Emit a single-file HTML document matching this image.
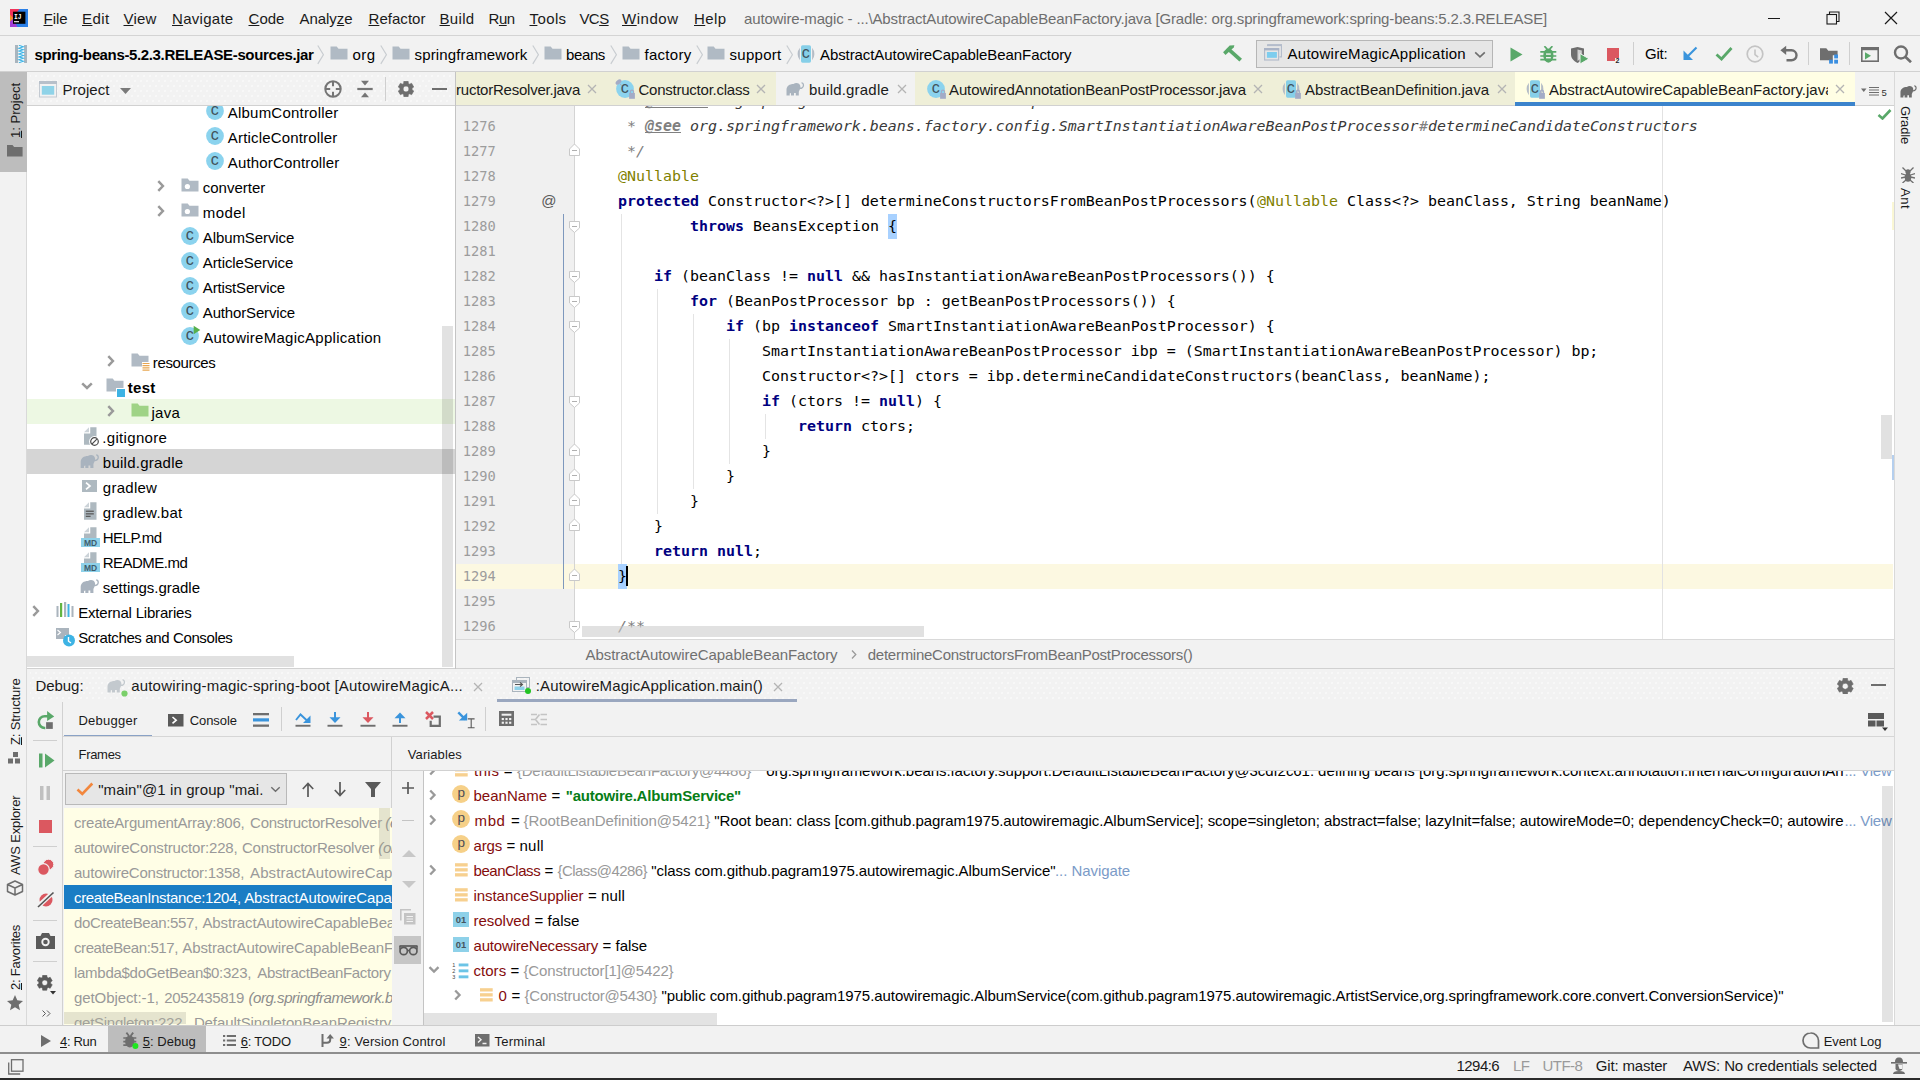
<!DOCTYPE html><html><head><meta charset="utf-8"><title>autowire-magic</title><style>
html,body{margin:0;padding:0}
body{width:1920px;height:1080px;overflow:hidden;position:relative;background:#f2f2f2;font-family:'Liberation Sans',sans-serif;font-size:15px;color:#000}
.a{position:absolute;display:block}
.t{position:absolute;white-space:pre;display:block}

.dots{background-image:radial-gradient(circle,#f9f9f9 0.6px,rgba(249,249,249,0) 1px),radial-gradient(circle,#f9f9f9 0.6px,rgba(249,249,249,0) 1px);background-size:6px 10px,6px 10px;background-position:0 1px,3px 6px}
u{text-decoration-skip-ink:none;text-underline-offset:1px}
</style></head><body><div class="a" style="left:0px;top:0px;width:1920px;height:35px;background:#f2f2f2;"></div><div class="a" style="left:0px;top:35px;width:1920px;height:1px;background:#d4d4d4;"></div><svg class="a" style="left:10px;top:9px;" width="18" height="18" viewBox="0 0 18 18"><rect width="18" height="18" fill="#2b7fe6"/><path d="M0 0h9.500L0 12z" fill="#f0325a"/><path d="M0 5.500L3.500 9.500 0 14z" fill="#f78c28"/><path d="M0 12.500l3 -2.500 4.500 8H0z" fill="#a13fd6"/><rect x="3" y="2.700" width="12.400" height="12.100" fill="#000"/><text x="4" y="9.600" font-size="7.400" font-weight="700" font-family="Liberation Mono,monospace" fill="#fff" textLength="7.500" lengthAdjust="spacingAndGlyphs">IJ</text><rect x="4" y="12" width="5" height="1.300" fill="#d8d8d8"/></svg><span class="t" id="t0" style="font-size:15px;line-height:20px;color:#1a1a1a;letter-spacing:-0.047px;left:43.5px;top:8.8px;"><u>F</u>ile</span><span class="t" id="t1" style="font-size:15px;line-height:20px;color:#1a1a1a;letter-spacing:0.410px;left:82.0px;top:8.8px;"><u>E</u>dit</span><span class="t" id="t2" style="font-size:15px;line-height:20px;color:#1a1a1a;letter-spacing:0.188px;left:123.5px;top:8.8px;"><u>V</u>iew</span><span class="t" id="t3" style="font-size:15px;line-height:20px;color:#1a1a1a;letter-spacing:0.285px;left:172.0px;top:8.8px;"><u>N</u>avigate</span><span class="t" id="t4" style="font-size:15px;line-height:20px;color:#1a1a1a;letter-spacing:0.031px;left:248.5px;top:8.8px;"><u>C</u>ode</span><span class="t" id="t5" style="font-size:15px;line-height:20px;color:#1a1a1a;letter-spacing:-0.054px;left:299.5px;top:8.8px;">Analy<u>z</u>e</span><span class="t" id="t6" style="font-size:15px;line-height:20px;color:#1a1a1a;letter-spacing:0.037px;left:368.5px;top:8.8px;"><u>R</u>efactor</span><span class="t" id="t7" style="font-size:15px;line-height:20px;color:#1a1a1a;letter-spacing:0.325px;left:439.5px;top:8.8px;"><u>B</u>uild</span><span class="t" id="t8" style="font-size:15px;line-height:20px;color:#1a1a1a;letter-spacing:-0.550px;left:488.6px;top:8.8px;">R<u>u</u>n</span><span class="t" id="t9" style="font-size:15px;line-height:20px;color:#1a1a1a;letter-spacing:0.394px;left:529.5px;top:8.8px;"><u>T</u>ools</span><span class="t" id="t10" style="font-size:15px;line-height:20px;color:#1a1a1a;letter-spacing:-0.550px;left:579.4px;top:8.8px;">VC<u>S</u></span><span class="t" id="t11" style="font-size:15px;line-height:20px;color:#1a1a1a;letter-spacing:0.521px;left:622.0px;top:8.8px;"><u>W</u>indow</span><span class="t" id="t12" style="font-size:15px;line-height:20px;color:#1a1a1a;letter-spacing:0.406px;left:694.0px;top:8.8px;"><u>H</u>elp</span><span class="t" id="t13" style="font-size:15px;line-height:20px;color:#6e6e6e;letter-spacing:-0.153px;left:744.0px;top:8.8px;">autowire-magic - ...\AbstractAutowireCapableBeanFactory.java [Gradle: org.springframework:spring-beans:5.2.3.RELEASE]</span><div class="a" style="left:1768px;top:18px;width:12px;height:1px;background:#1a1a1a;"></div><svg class="a" style="left:1826px;top:11px;" width="14" height="14" viewBox="0 0 14 14"><path d="M3.500 3.500v-2.500h9.500v9.500h-2.500" fill="none" stroke="#1a1a1a" stroke-width="1.100"/><rect x="1" y="3.500" width="9.500" height="9.500" fill="none" stroke="#1a1a1a" stroke-width="1.100"/></svg><svg class="a" style="left:1884px;top:11px;" width="14" height="14" viewBox="0 0 14 14"><path d="M1 1l12 12M13 1l-12 12" stroke="#1a1a1a" stroke-width="1.200" fill="none"/></svg><div class="a" style="left:0px;top:36px;width:1920px;height:35px;background:#f2f2f2;"></div><div class="a" style="left:0px;top:71px;width:1920px;height:1px;background:#d1d1d1;"></div><svg class="a" style="left:14.9px;top:44.8px;" width="12.2" height="18.2" viewBox="0 0 12.2 18.2"><rect x="0" y="0" width="3.100" height="18.200" fill="#a9b5be"/><rect x="9.100" y="0" width="3.100" height="18.200" fill="#a9b5be"/><rect x="3.700" y="0" width="4.800" height="18.200" fill="#f4fbfe"/><polyline points="3.9 0.30 8.3 1.75 3.9 3.20 8.3 4.65 3.9 6.10 8.3 7.55 3.9 9.00 8.3 10.45 3.9 11.90 8.3 13.35 3.9 14.80 8.3 16.25 3.9 17.70" fill="none" stroke="#3fb4e6" stroke-width="1.100"/></svg><span class="t" id="t14" style="font-size:15px;line-height:20px;color:#000;font-weight:700;letter-spacing:-0.358px;left:34.5px;top:44.7px;">spring-beans-5.2.3.RELEASE-sources.jar</span><svg class="a" style="left:317px;top:44.5px;" width="8" height="20" viewBox="0 0 8 20"><path d="M0.800 0.500l5.600 9.200-5.600 9.200" fill="none" stroke="#c9cdd1" stroke-width="1.200"/></svg><svg class="a" style="left:380px;top:44.5px;" width="8" height="20" viewBox="0 0 8 20"><path d="M0.800 0.500l5.600 9.200-5.600 9.200" fill="none" stroke="#c9cdd1" stroke-width="1.200"/></svg><svg class="a" style="left:532px;top:44.5px;" width="8" height="20" viewBox="0 0 8 20"><path d="M0.800 0.500l5.600 9.200-5.600 9.200" fill="none" stroke="#c9cdd1" stroke-width="1.200"/></svg><svg class="a" style="left:610px;top:44.5px;" width="8" height="20" viewBox="0 0 8 20"><path d="M0.800 0.500l5.600 9.200-5.600 9.200" fill="none" stroke="#c9cdd1" stroke-width="1.200"/></svg><svg class="a" style="left:695.5px;top:44.5px;" width="8" height="20" viewBox="0 0 8 20"><path d="M0.800 0.500l5.600 9.200-5.600 9.200" fill="none" stroke="#c9cdd1" stroke-width="1.200"/></svg><svg class="a" style="left:785.5px;top:44.5px;" width="8" height="20" viewBox="0 0 8 20"><path d="M0.800 0.500l5.600 9.200-5.600 9.200" fill="none" stroke="#c9cdd1" stroke-width="1.200"/></svg><svg class="a" style="left:330px;top:46.3px;" width="18" height="14" viewBox="0 0 18 14"><path d="M0.5 0.5h6.2l1.8 2.2h9v10.8h-17z" fill="#b0bac4"/></svg><span class="t" id="t15" style="font-size:15px;line-height:20px;color:#000;letter-spacing:0.438px;left:352.5px;top:44.7px;">org</span><svg class="a" style="left:392px;top:46.3px;" width="18" height="14" viewBox="0 0 18 14"><path d="M0.5 0.5h6.2l1.8 2.2h9v10.8h-17z" fill="#b0bac4"/></svg><span class="t" id="t16" style="font-size:15px;line-height:20px;color:#000;letter-spacing:0.142px;left:414.5px;top:44.7px;">springframework</span><svg class="a" style="left:544px;top:46.3px;" width="18" height="14" viewBox="0 0 18 14"><path d="M0.5 0.5h6.2l1.8 2.2h9v10.8h-17z" fill="#b0bac4"/></svg><span class="t" id="t17" style="font-size:15px;line-height:20px;color:#000;letter-spacing:-0.375px;left:566.0px;top:44.7px;">beans</span><svg class="a" style="left:622px;top:46.3px;" width="18" height="14" viewBox="0 0 18 14"><path d="M0.5 0.5h6.2l1.8 2.2h9v10.8h-17z" fill="#b0bac4"/></svg><span class="t" id="t18" style="font-size:15px;line-height:20px;color:#000;letter-spacing:0.283px;left:644.5px;top:44.7px;">factory</span><svg class="a" style="left:707px;top:46.3px;" width="18" height="14" viewBox="0 0 18 14"><path d="M0.5 0.5h6.2l1.8 2.2h9v10.8h-17z" fill="#b0bac4"/></svg><span class="t" id="t19" style="font-size:15px;line-height:20px;color:#000;letter-spacing:0.279px;left:729.5px;top:44.7px;">support</span><svg class="a" style="left:797px;top:45.3px;overflow:visible;" width="20" height="19" viewBox="0 0 20 19"><rect x="4" y="0.300" width="10" height="17.400" rx="1.600" fill="#86cfe8"/><path d="M2.900 2.800a9.500 9.500 0 0 0 0 12.400z" fill="#b4bcc6"/><path d="M15.100 2.800a9.500 9.500 0 0 1 0 12.400z" fill="#b4bcc6"/><text x="8.8" y="13.300" font-size="16" font-family="Liberation Sans,sans-serif" text-anchor="middle" fill="#42525b">c</text></svg><span class="t" id="t20" style="font-size:15px;line-height:20px;color:#000;letter-spacing:-0.082px;left:820.0px;top:44.7px;">AbstractAutowireCapableBeanFactory</span><svg class="a" style="left:1222px;top:44px;" width="21" height="18" viewBox="0 0 21 18"><path d="M1.100 8.200l6.600-6.700 4.700-.300-.700 2.300-8.200 7.400z" fill="#59a869"/><path d="M6.300 7.400l2.700-2.500 11 9.800-2.600 2.700z" fill="#59a869"/></svg><div class="a" style="left:1256px;top:40px;width:237px;height:27.5px;background:#e6e6e6;border:1.500px solid #b6b6b6;box-sizing:border-box;"></div><svg class="a" style="left:1264px;top:44px;" width="18" height="17" viewBox="0 0 18 17"><path d="M3.500 0.800h14v12h-2" fill="none" stroke="#b4bccb" stroke-width="1.200"/><rect x="3" y="0.300" width="15" height="1.800" fill="#b4bccb"/><rect x="0.600" y="4.600" width="14" height="11.400" fill="#e6e6e6" stroke="#b4bccb" stroke-width="1.200"/><rect x="0" y="4" width="15.200" height="2.400" fill="#a9b3c6"/><rect x="2.900" y="8" width="10" height="5.800" fill="#7dcdee"/></svg><span class="t" id="t21" style="font-size:15px;line-height:20px;color:#000;letter-spacing:0.281px;left:1287.5px;top:44.3px;">AutowireMagicApplication</span><svg class="a" style="left:1474px;top:50.5px;" width="12" height="8" viewBox="0 0 12 8"><path d="M1.200 1.300l4.800 4.600 4.800-4.600" fill="none" stroke="#6e6e6e" stroke-width="1.6"/></svg><svg class="a" style="left:1510px;top:47px;" width="13" height="15" viewBox="0 0 13 15"><path d="M0.500 0.500v14l12-7z" fill="#59a869"/></svg><svg class="a" style="left:1540px;top:46px;" width="17" height="17" viewBox="0 0 17 17"><ellipse cx="8.400" cy="9.600" rx="5.100" ry="7.100" fill="#59a869"/><path d="M0.300 5.900h16M0.300 10h16M0.300 13.700h16" stroke="#59a869" stroke-width="1.700"/><path d="M4.400 0.200l2.800 3M12.400 0.200l-2.800 3" stroke="#59a869" stroke-width="1.700" fill="none"/><rect x="6" y="7.400" width="4.800" height="1.400" fill="#f2f2f2"/><rect x="6" y="11" width="4.800" height="1.400" fill="#f2f2f2"/></svg><svg class="a" style="left:1570px;top:46.5px;" width="21" height="17" viewBox="0 0 21 17"><path d="M1 1.500l6.500-1.500 6.500 1.500v6c0 4-3 6.800-6.500 8.500-3.500-1.700-6.500-4.500-6.500-8.500z" fill="#6e6e6e"/><path d="M7.500 2.500v11.500c2.500-1.500 4.300-3.500 4.300-6.500v-4z" fill="#f2f2f2" opacity=".75"/><path d="M10 6.500v10.500l9-5.200z" fill="#59a869" stroke="#f2f2f2" stroke-width="1"/></svg><div class="a" style="left:1606.5px;top:48px;width:12.5px;height:12.5px;background:#db5860;"></div><div class="a" style="left:1615px;top:58px;width:6px;height:6px;background:#f2f2f2;"></div><span class="t" id="t22" style="font-size:7px;line-height:10px;color:#222;font-weight:700;left:1615.5px;top:55.6px;">2</span><div class="a" style="left:1633px;top:42px;width:1px;height:23px;background:#cfcfcf;"></div><span class="t" id="t23" style="font-size:15px;line-height:20px;color:#000;letter-spacing:-0.211px;left:1645.0px;top:44.3px;">Git:</span><svg class="a" style="left:1682px;top:46px;" width="16" height="15" viewBox="0 0 16 15"><path d="M14.500 1.500l-11 11" stroke="#3a94dc" stroke-width="2.200" fill="none"/><path d="M1.500 4.500v9.500h9.500z" fill="#3a94dc"/></svg><svg class="a" style="left:1715px;top:46px;" width="18" height="15" viewBox="0 0 18 15"><path d="M1.500 8.500l5 4.500 10-11" stroke="#59a869" stroke-width="2.800" fill="none"/></svg><svg class="a" style="left:1746px;top:45px;" width="18" height="18" viewBox="0 0 18 18"><circle cx="9" cy="9" r="7.800" fill="none" stroke="#c4c4c4" stroke-width="1.700"/><path d="M9 4.500v5l3.200 2.600" fill="none" stroke="#c4c4c4" stroke-width="1.600"/></svg><svg class="a" style="left:1780px;top:45px;" width="18" height="17" viewBox="0 0 18 17"><path d="M5.500 5.300h6a5 5 0 0 1 0 10h-5" fill="none" stroke="#6e6e6e" stroke-width="2.400"/><path d="M6.200 0.700v9.200l-5.800-4.600z" fill="#6e6e6e"/></svg><div class="a" style="left:1808px;top:42px;width:1px;height:23px;background:#cfcfcf;"></div><svg class="a" style="left:1820px;top:47.5px;" width="19" height="16" viewBox="0 0 19 16"><path d="M0 0.300h6.300l2 2.500h9.300v4.500h-4.800v5h-12.800z" fill="#6e6e6e"/><rect x="14.200" y="6.500" width="3.800" height="3.900" fill="#3a8ee0"/><rect x="9.100" y="11.700" width="3.800" height="3.900" fill="#3a8ee0"/><rect x="14.200" y="11.700" width="3.800" height="3.900" fill="#3a8ee0"/></svg><div class="a" style="left:1849px;top:42px;width:1px;height:23px;background:#cfcfcf;"></div><svg class="a" style="left:1861px;top:46.5px;" width="18" height="15" viewBox="0 0 18 15"><rect x="0.800" y="0.800" width="16.400" height="13.400" fill="none" stroke="#6e6e6e" stroke-width="1.600"/><rect x="0" y="0" width="18" height="3.200" fill="#6e6e6e"/><path d="M4 5.200v7.200l6-3.600z" fill="#59a869"/></svg><svg class="a" style="left:1892.2px;top:45px;" width="20" height="18" viewBox="0 0 20 18"><circle cx="9" cy="7.500" r="6" fill="none" stroke="#6e6e6e" stroke-width="2.400"/><path d="M13.300 11.800l5.700 5.400" stroke="#6e6e6e" stroke-width="2.700"/></svg><div class="a" style="left:0px;top:72px;width:27px;height:953px;background:#f2f2f2;"></div><div class="a" style="left:26px;top:72px;width:1px;height:953px;background:#d9d9d9;"></div><div class="a" style="left:0px;top:72px;width:27px;height:100px;background:#bdbdbd;"></div><span class="t" id="t24" style="font-size:13px;line-height:18px;color:#1a1a1a;letter-spacing:0.008px;left:6.7px;top:138.0px;transform-origin:0 0;transform:rotate(-90deg);"><u>1</u>: Project</span><svg class="a" style="left:7px;top:145px;" width="16" height="12" viewBox="0 0 16 12"><path d="M0 0h5.500l1.600 2h8.500v9.500h-15.600z" fill="#6e6e6e"/></svg><span class="t" id="t25" style="font-size:13px;line-height:18px;color:#1a1a1a;letter-spacing:-0.118px;left:6.7px;top:745.0px;transform-origin:0 0;transform:rotate(-90deg);"><u>Z</u>: Structure</span><svg class="a" style="left:8px;top:752px;" width="13" height="12" viewBox="0 0 13 12"><rect x="5" y="0" width="5" height="5" fill="#6e6e6e"/><rect x="0" y="6.500" width="5" height="5" fill="#6e6e6e"/><rect x="7" y="6.500" width="5" height="5" fill="#6e6e6e"/></svg><span class="t" id="t26" style="font-size:13px;line-height:18px;color:#1a1a1a;letter-spacing:-0.138px;left:6.7px;top:874.5px;transform-origin:0 0;transform:rotate(-90deg);">AWS Explorer</span><svg class="a" style="left:6px;top:880px;" width="18" height="16" viewBox="0 0 18 16"><path d="M9 1l7.500 3.500v7l-7.500 3.500-7.500-3.500v-7z M1.500 4.500l7.500 3.500 7.500-3.500 M9 8v7" fill="none" stroke="#6e6e6e" stroke-width="1.500" stroke-linejoin="round"/></svg><span class="t" id="t27" style="font-size:13px;line-height:18px;color:#1a1a1a;letter-spacing:-0.243px;left:6.7px;top:990.0px;transform-origin:0 0;transform:rotate(-90deg);"><u>2</u>: Favorites</span><svg class="a" style="left:6.5px;top:995px;" width="16" height="15.5" viewBox="0 0 16 15.5"><path d="M8 0l2.300 5.300 5.700.600-4.300 3.800 1.300 5.600-5-3-5 3 1.300-5.600-4.300-3.800 5.700-.600z" fill="#6e6e6e"/></svg><div class="a" style="left:1894px;top:72px;width:26px;height:953px;background:#f2f2f2;"></div><div class="a" style="left:1894px;top:72px;width:1px;height:953px;background:#d9d9d9;"></div><svg class="a" style="left:1899.5px;top:84.8px;" width="17.5" height="13" viewBox="0 0 19 14"><path d="M0.500 13.500V8C0.500 4 3.500 2 7.500 2C9 0.700 11.500 0.500 13 1.800C14.300 2.900 14.600 4.500 14.300 5.600C15.800 5.600 16.800 4.600 16.800 3.200C16.800 2.200 16.200 1.600 15.500 1.600L15.500 0.300C17 0.300 18.100 1.500 18.100 3.200C18.100 5.600 16.300 7.100 14 7.100C13.500 8.500 12.800 9.500 12.800 10V13.500H9.800V11H8V13.500H5V11C4.500 11 4 11.200 3.700 11.500V13.500Z" fill="#6e6e6e"/></svg><span class="t" id="t28" style="font-size:13px;line-height:18px;color:#1a1a1a;letter-spacing:-0.172px;left:1914.0px;top:105.5px;transform-origin:0 0;transform:rotate(90deg);">Gradle</span><svg class="a" style="left:1901px;top:166.5px;" width="14" height="16" viewBox="0 0 14 16"><ellipse cx="7" cy="10.500" rx="3.300" ry="4.200" fill="#6e6e6e"/><circle cx="7" cy="4.800" r="2.600" fill="#6e6e6e"/><path d="M5 4l-3.500-3.500M9 4l3.500-3.500M4.500 8l-4.500-1.500M9.500 8l4.500-1.500M4.500 10l-4.500 1M9.500 10l4.500 1M5 13l-3.500 3M9 13l3.500 3" stroke="#6e6e6e" stroke-width="1.300" fill="none"/></svg><span class="t" id="t29" style="font-size:13px;line-height:18px;color:#1a1a1a;letter-spacing:0.550px;left:1914.0px;top:188.4px;transform-origin:0 0;transform:rotate(90deg);">Ant</span><div class="a" style="left:27px;top:72px;width:428px;height:34px;background:#f2f2f2;"></div><div class="a dots" style="left:30px;top:75px;width:422px;height:28px"></div><div class="a" style="left:27px;top:105px;width:428px;height:1px;background:#d1d1d1;"></div><div class="a" style="left:455px;top:72px;width:1px;height:597px;background:#c4c4c4;"></div><svg class="a" style="left:39px;top:81.3px;" width="18" height="17" viewBox="0 0 18 17"><rect x="0.500" y="0.500" width="17" height="15.500" fill="#f2f2f2" stroke="#c3cad2" stroke-width="1"/><rect x="0" y="0" width="18" height="3" fill="#b7c0ca"/><rect x="2.800" y="5" width="12.400" height="8.700" fill="#8fd3e8"/></svg><span class="t" id="t30" style="font-size:15px;line-height:20px;color:#1a1a1a;letter-spacing:0.045px;left:62.5px;top:79.8px;">Project</span><svg class="a" style="left:119.5px;top:87.5px;" width="11" height="6" viewBox="0 0 11 6"><path d="M0 0h11l-5.500 6z" fill="#7a7a7a"/></svg><svg class="a" style="left:324px;top:80px;" width="18" height="18" viewBox="0 0 18 18"><circle cx="9" cy="9" r="7.700" fill="none" stroke="#757575" stroke-width="2"/><path d="M9 1v5.200M9 11.800v5.200M1 9h5.200M11.800 9h5.200" stroke="#757575" stroke-width="2"/></svg><svg class="a" style="left:357px;top:80px;" width="16" height="18" viewBox="0 0 16 18"><rect x="0.300" y="7.900" width="15.400" height="2.200" fill="#757575"/><path d="M4 0.800h8l-4 4.600z M4 17.200h8l-4-4.600z" fill="#757575"/></svg><div class="a" style="left:385px;top:77px;width:1px;height:24px;background:#cfcfcf;"></div><svg class="a" style="left:398px;top:81px;" width="16" height="16" viewBox="0 0 16 16"><path fill-rule="evenodd" d="M5.87,0.29 L10.13,0.29 L10.38,2.38 L11.68,3.13 L13.61,2.30 L15.74,5.99 L14.05,7.25 L14.05,8.75 L15.74,10.01 L13.61,13.70 L11.68,12.87 L10.38,13.62 L10.13,15.71 L5.87,15.71 L5.62,13.62 L4.32,12.87 L2.39,13.70 L0.26,10.01 L1.95,8.75 L1.95,7.25 L0.26,5.99 L2.39,2.30 L4.32,3.13 L5.62,2.38z M8 5.100a2.900 2.900 0 1 0 0.001 0z" fill="#6e6e6e" stroke="#6e6e6e" stroke-width="0.600" stroke-linejoin="round"/></svg><div class="a" style="left:431.5px;top:88px;width:15px;height:2px;background:#6e6e6e;"></div><div class="a" style="left:27px;top:106px;width:428px;height:562px;overflow:hidden;background:#fff;"><div class="a" style="left:0px;top:293px;width:428px;height:25px;background:#edf8e3;"></div><div class="a" style="left:0px;top:343px;width:428px;height:25px;background:#d5d5d5;"></div><svg class="a" style="left:179px;top:-3.9000000000000057px;overflow:visible;" width="20" height="19" viewBox="0 0 20 19"><circle cx="9" cy="9" r="8.900" fill="#8bd3ee"/><text x="8.7" y="13.300" font-size="16" font-family="Liberation Sans,sans-serif" text-anchor="middle" fill="#42525b">c</text></svg><span class="t" id="t31" style="font-size:15px;line-height:20px;color:#000;letter-spacing:0.210px;left:200.8px;top:-2.9px;">AlbumController</span><svg class="a" style="left:179px;top:21.099999999999994px;overflow:visible;" width="20" height="19" viewBox="0 0 20 19"><circle cx="9" cy="9" r="8.900" fill="#8bd3ee"/><text x="8.7" y="13.300" font-size="16" font-family="Liberation Sans,sans-serif" text-anchor="middle" fill="#42525b">c</text></svg><span class="t" id="t32" style="font-size:15px;line-height:20px;color:#000;letter-spacing:0.176px;left:200.8px;top:22.1px;">ArticleController</span><svg class="a" style="left:179px;top:46.099999999999994px;overflow:visible;" width="20" height="19" viewBox="0 0 20 19"><circle cx="9" cy="9" r="8.900" fill="#8bd3ee"/><text x="8.7" y="13.300" font-size="16" font-family="Liberation Sans,sans-serif" text-anchor="middle" fill="#42525b">c</text></svg><span class="t" id="t33" style="font-size:15px;line-height:20px;color:#000;letter-spacing:0.155px;left:200.8px;top:47.1px;">AuthorController</span><svg class="a" style="left:129.7px;top:73.69999999999999px;" width="8" height="12" viewBox="0 0 8 12"><path d="M1.300 1.200l4.600 4.800-4.600 4.800" fill="none" stroke="#9a9a9a" stroke-width="2.500"/></svg><svg class="a" style="left:154px;top:72.19999999999999px;" width="18" height="14" viewBox="0 0 18 14"><path d="M0.5 0.5h6.2l1.8 2.2h9v10.8h-17z" fill="#b0bac4"/><circle cx="6.400" cy="8.500" r="2.600" fill="#fff"/></svg><span class="t" id="t34" style="font-size:15px;line-height:20px;color:#000;letter-spacing:-0.015px;left:175.8px;top:72.1px;">converter</span><svg class="a" style="left:129.7px;top:98.69999999999999px;" width="8" height="12" viewBox="0 0 8 12"><path d="M1.300 1.200l4.600 4.800-4.600 4.800" fill="none" stroke="#9a9a9a" stroke-width="2.500"/></svg><svg class="a" style="left:154px;top:97.19999999999999px;" width="18" height="14" viewBox="0 0 18 14"><path d="M0.5 0.5h6.2l1.8 2.2h9v10.8h-17z" fill="#b0bac4"/><circle cx="6.400" cy="8.500" r="2.600" fill="#fff"/></svg><span class="t" id="t35" style="font-size:15px;line-height:20px;color:#000;letter-spacing:0.428px;left:175.8px;top:97.1px;">model</span><svg class="a" style="left:154px;top:121.1px;overflow:visible;" width="20" height="19" viewBox="0 0 20 19"><circle cx="9" cy="9" r="8.900" fill="#8bd3ee"/><text x="8.7" y="13.300" font-size="16" font-family="Liberation Sans,sans-serif" text-anchor="middle" fill="#42525b">c</text></svg><span class="t" id="t36" style="font-size:15px;line-height:20px;color:#000;letter-spacing:-0.096px;left:175.8px;top:122.1px;">AlbumService</span><svg class="a" style="left:154px;top:146.1px;overflow:visible;" width="20" height="19" viewBox="0 0 20 19"><circle cx="9" cy="9" r="8.900" fill="#8bd3ee"/><text x="8.7" y="13.300" font-size="16" font-family="Liberation Sans,sans-serif" text-anchor="middle" fill="#42525b">c</text></svg><span class="t" id="t37" style="font-size:15px;line-height:20px;color:#000;letter-spacing:-0.093px;left:175.8px;top:147.1px;">ArticleService</span><svg class="a" style="left:154px;top:171.10000000000002px;overflow:visible;" width="20" height="19" viewBox="0 0 20 19"><circle cx="9" cy="9" r="8.900" fill="#8bd3ee"/><text x="8.7" y="13.300" font-size="16" font-family="Liberation Sans,sans-serif" text-anchor="middle" fill="#42525b">c</text></svg><span class="t" id="t38" style="font-size:15px;line-height:20px;color:#000;letter-spacing:-0.153px;left:175.8px;top:172.1px;">ArtistService</span><svg class="a" style="left:154px;top:196.10000000000002px;overflow:visible;" width="20" height="19" viewBox="0 0 20 19"><circle cx="9" cy="9" r="8.900" fill="#8bd3ee"/><text x="8.7" y="13.300" font-size="16" font-family="Liberation Sans,sans-serif" text-anchor="middle" fill="#42525b">c</text></svg><span class="t" id="t39" style="font-size:15px;line-height:20px;color:#000;letter-spacing:-0.155px;left:175.8px;top:197.1px;">AuthorService</span><svg class="a" style="left:154px;top:221.10000000000002px;overflow:visible;" width="20" height="19" viewBox="0 0 20 19"><circle cx="9" cy="9" r="8.900" fill="#8bd3ee"/><text x="8.7" y="13.300" font-size="16" font-family="Liberation Sans,sans-serif" text-anchor="middle" fill="#42525b">c</text><path d="M12.700 -1.200v8.500l6.600-4.250z" fill="#57b04c"/></svg><span class="t" id="t40" style="font-size:15px;line-height:20px;color:#000;letter-spacing:0.272px;left:176.2px;top:222.1px;">AutowireMagicApplication</span><svg class="a" style="left:79.7px;top:248.7px;" width="8" height="12" viewBox="0 0 8 12"><path d="M1.300 1.200l4.600 4.800-4.600 4.800" fill="none" stroke="#9a9a9a" stroke-width="2.500"/></svg><svg class="a" style="left:104px;top:247.0px;" width="18" height="14" viewBox="0 0 18 14"><path d="M0.5 0.5h6.2l1.8 2.2h9v10.8h-17z" fill="#b0bac4"/></svg><svg class="a" style="left:115px;top:255.5px;" width="8" height="9" viewBox="0 0 8 9"><rect width="8" height="9" fill="#fff"/><path d="M0.500 1.500h7M0.500 3.700h7M0.500 5.900h7M0.500 8.100h7" stroke="#e8a650" stroke-width="1.200"/></svg><span class="t" id="t41" style="font-size:15px;line-height:20px;color:#000;letter-spacing:-0.351px;left:125.8px;top:247.1px;">resources</span><svg class="a" style="left:54px;top:276.3px;" width="12" height="8" viewBox="0 0 12 8"><path d="M1.200 1.300l4.800 4.600 4.800-4.600" fill="none" stroke="#9a9a9a" stroke-width="2.5"/></svg><svg class="a" style="left:79px;top:272.0px;" width="18" height="14" viewBox="0 0 18 14"><path d="M0.5 0.5h6.2l1.8 2.2h9v10.8h-17z" fill="#b0bac4"/></svg><svg class="a" style="left:89px;top:281.5px;" width="9" height="9" viewBox="0 0 9 9"><rect width="9" height="9" fill="#fff"/><rect x="1" y="1" width="8" height="8" fill="#3db3e4"/></svg><span class="t" id="t42" style="font-size:15px;line-height:20px;color:#000;font-weight:700;letter-spacing:0.253px;left:100.8px;top:272.1px;">test</span><svg class="a" style="left:79.7px;top:298.7px;" width="8" height="12" viewBox="0 0 8 12"><path d="M1.300 1.200l4.600 4.800-4.600 4.800" fill="none" stroke="#9a9a9a" stroke-width="2.500"/></svg><svg class="a" style="left:104px;top:297.2px;" width="18" height="14" viewBox="0 0 18 14"><path d="M0.5 0.5h6.2l1.8 2.2h9v10.8h-17z" fill="#9fd386"/></svg><span class="t" id="t43" style="font-size:15px;line-height:20px;color:#000;letter-spacing:0.242px;left:124.5px;top:297.1px;">java</span><svg class="a" style="left:56.900000000000006px;top:321px;" width="13" height="18" viewBox="0 0 13 18"><path d="M6.250 0.200V6.450H0V17.700H12.500V0.200Z" fill="#aeb9c0"/><path d="M5 0.200L0 5.200H5Z" fill="#ccd3d8"/></svg><svg class="a" style="left:62px;top:329.8px;" width="11" height="11" viewBox="0 0 11 11"><circle cx="5.500" cy="5.500" r="5.400" fill="#fff"/><circle cx="5.500" cy="5.500" r="3.800" fill="none" stroke="#4a4a4a" stroke-width="1.200"/><path d="M2.900 8.100l5.200-5.200" stroke="#4a4a4a" stroke-width="1.200"/></svg><span class="t" id="t44" style="font-size:15px;line-height:20px;color:#000;letter-spacing:0.318px;left:75.3px;top:322.1px;">.gitignore</span><svg class="a" style="left:53.3px;top:348px;" width="20" height="14.5" viewBox="0 0 19 14"><path d="M0.500 13.500V8C0.500 4 3.500 2 7.500 2C9 0.700 11.500 0.500 13 1.800C14.300 2.900 14.600 4.500 14.300 5.600C15.800 5.600 16.800 4.600 16.800 3.200C16.800 2.200 16.200 1.600 15.500 1.600L15.500 0.300C17 0.300 18.100 1.500 18.100 3.200C18.100 5.600 16.300 7.100 14 7.100C13.500 8.500 12.800 9.500 12.800 10V13.500H9.800V11H8V13.500H5V11C4.500 11 4 11.200 3.700 11.500V13.500Z" fill="#a9b3be"/></svg><span class="t" id="t45" style="font-size:15px;line-height:20px;color:#000;letter-spacing:0.245px;left:75.8px;top:347.1px;">build.gradle</span><svg class="a" style="left:55.3px;top:374px;" width="15" height="12" viewBox="0 0 15 12"><rect width="15" height="12" fill="#aeb9c0"/><path d="M4 2.600l4 3.400-4 3.400" stroke="#fff" stroke-width="1.700" fill="none"/></svg><span class="t" id="t46" style="font-size:15px;line-height:20px;color:#000;letter-spacing:0.267px;left:75.8px;top:372.1px;">gradlew</span><svg class="a" style="left:56.900000000000006px;top:396px;" width="13" height="18" viewBox="0 0 13 18"><path d="M6.250 0.200V6.450H0V17.700H12.500V0.200Z" fill="#aeb9c0"/><path d="M5 0.200L0 5.200H5Z" fill="#ccd3d8"/><rect x="1.800" y="8.600" width="8" height="1.300" fill="#5a5a5a"/><rect x="1.800" y="11.200" width="8" height="1.300" fill="#5a5a5a"/><rect x="1.800" y="13.700" width="4.800" height="1.300" fill="#5a5a5a"/></svg><span class="t" id="t47" style="font-size:15px;line-height:20px;color:#000;letter-spacing:0.270px;left:75.8px;top:397.1px;">gradlew.bat</span><svg class="a" style="left:56.900000000000006px;top:421px;" width="13" height="11" viewBox="0 0 13 11"><path d="M6.250 0.200V6.450H0V11H12.500V0.200Z" fill="#aeb9c0"/><path d="M5 0.200L0 5.200H5Z" fill="#ccd3d8"/></svg><svg class="a" style="left:54px;top:431.5px;" width="19" height="9" viewBox="0 0 19 9"><rect width="19" height="9" fill="#8ed1e9"/><text x="9.500" y="7.800" font-size="8.500" font-weight="700" font-family="Liberation Sans,sans-serif" text-anchor="middle" fill="#3f5d6e">MD</text></svg><span class="t" id="t48" style="font-size:15px;line-height:20px;color:#000;letter-spacing:-0.509px;left:75.8px;top:422.1px;">HELP.md</span><svg class="a" style="left:56.900000000000006px;top:446px;" width="13" height="11" viewBox="0 0 13 11"><path d="M6.250 0.200V6.450H0V11H12.500V0.200Z" fill="#aeb9c0"/><path d="M5 0.200L0 5.200H5Z" fill="#ccd3d8"/></svg><svg class="a" style="left:54px;top:456.5px;" width="19" height="9" viewBox="0 0 19 9"><rect width="19" height="9" fill="#8ed1e9"/><text x="9.500" y="7.800" font-size="8.500" font-weight="700" font-family="Liberation Sans,sans-serif" text-anchor="middle" fill="#3f5d6e">MD</text></svg><span class="t" id="t49" style="font-size:15px;line-height:20px;color:#000;letter-spacing:-0.532px;left:75.8px;top:447.1px;">README.md</span><svg class="a" style="left:53.3px;top:473px;" width="20" height="14.5" viewBox="0 0 19 14"><path d="M0.500 13.500V8C0.500 4 3.500 2 7.500 2C9 0.700 11.500 0.500 13 1.800C14.300 2.900 14.600 4.500 14.300 5.600C15.800 5.600 16.800 4.600 16.800 3.200C16.800 2.200 16.200 1.600 15.500 1.600L15.500 0.300C17 0.300 18.100 1.500 18.100 3.200C18.100 5.600 16.300 7.100 14 7.100C13.500 8.500 12.800 9.500 12.800 10V13.500H9.800V11H8V13.500H5V11C4.500 11 4 11.200 3.700 11.500V13.500Z" fill="#a9b3be"/></svg><span class="t" id="t50" style="font-size:15px;line-height:20px;color:#000;letter-spacing:-0.024px;left:75.8px;top:472.1px;">settings.gradle</span><svg class="a" style="left:4.699999999999999px;top:498.70000000000005px;" width="8" height="12" viewBox="0 0 8 12"><path d="M1.300 1.200l4.600 4.800-4.600 4.800" fill="none" stroke="#9a9a9a" stroke-width="2.500"/></svg><svg class="a" style="left:29px;top:496.0px;" width="18" height="15" viewBox="0 0 18 15"><rect x="0.500" y="4" width="2" height="11" fill="#aab4bd"/><rect x="4" y="1" width="2.200" height="14" fill="#62b543"/><rect x="8" y="0" width="2.200" height="15" fill="#aab4bd"/><rect x="11.500" y="2" width="2" height="13" fill="#3db3e4"/><rect x="15.500" y="4" width="2" height="11" fill="#aab4bd"/></svg><span class="t" id="t51" style="font-size:15px;line-height:20px;color:#000;letter-spacing:-0.190px;left:51.2px;top:497.1px;">External Libraries</span><svg class="a" style="left:29px;top:521.5px;" width="19" height="19" viewBox="0 0 19 19"><path d="M0 0h13v7h-4v4h-9z" fill="#aab4bd"/><path d="M1.500 2l3 2.500-3 2.500" stroke="#fff" stroke-width="1.100" fill="none"/><circle cx="13" cy="12.500" r="6" fill="#3db3e4"/><path d="M12.500 9v4.200l2.500 1.800" stroke="#fff" stroke-width="1.400" fill="none"/></svg><span class="t" id="t52" style="font-size:15px;line-height:20px;color:#000;letter-spacing:-0.377px;left:51.2px;top:522.1px;">Scratches and Consoles</span><div class="a" style="left:415px;top:220px;width:11px;height:341px;background:rgba(0,0,0,0.115);"></div><div class="a" style="left:0px;top:549.5px;width:267px;height:11px;background:#e1e1e1;"></div></div><div class="a" style="left:27px;top:668px;width:428px;height:1px;background:#d1d1d1;"></div><div class="a" style="left:456px;top:72px;width:1438px;height:33px;background:#f2f2f2;"></div><div class="a" style="left:456px;top:72px;width:320px;height:33px;background:#efefd8;"></div><div class="a" style="left:915px;top:72px;width:600px;height:33px;background:#efefd8;"></div><div class="a" style="left:1515px;top:72px;width:340px;height:33px;background:#fffee4;"></div><div class="a" style="left:456px;top:105px;width:1438px;height:1px;background:#d1d1d1;"></div><div class="a" style="left:1515px;top:102px;width:340px;height:4px;background:#3c84cc;"></div><span class="t" id="t53" style="font-size:15px;line-height:20px;color:#1a1a1a;letter-spacing:-0.231px;left:456.0px;top:79.8px;">ructorResolver.java</span><svg class="a" style="left:586.5px;top:84px;" width="10" height="10" viewBox="0 0 10 10"><path d="M1 1l8 8M9 1l-8 8" stroke="#b4b4b4" stroke-width="1.3" fill="none"/></svg><svg class="a" style="left:616px;top:80px;overflow:visible;" width="20" height="19" viewBox="0 0 20 19"><circle cx="9" cy="9" r="8.900" fill="#8bd3ee"/><ellipse cx="2.500" cy="2" rx="3.400" ry="2" transform="rotate(-42 2.500 2)" fill="#a3abc6"/><path d="M4 4l2 1.800" stroke="#a3abc6" stroke-width="1"/><text x="8.7" y="13.300" font-size="16" font-family="Liberation Sans,sans-serif" text-anchor="middle" fill="#42525b">c</text><rect x="13.100" y="13" width="5.800" height="5.800" fill="#a3abc6"/><path d="M14.400 13v-1.300a1.600 1.600 0 0 1 3.200 0v1.300" fill="none" stroke="#a3abc6" stroke-width="1.100"/></svg><span class="t" id="t54" style="font-size:15px;line-height:20px;color:#1a1a1a;letter-spacing:-0.238px;left:638.5px;top:79.8px;">Constructor.class</span><svg class="a" style="left:756px;top:84px;" width="10" height="10" viewBox="0 0 10 10"><path d="M1 1l8 8M9 1l-8 8" stroke="#b4b4b4" stroke-width="1.3" fill="none"/></svg><svg class="a" style="left:786px;top:82px;" width="19" height="14" viewBox="0 0 19 14"><path d="M0.500 13.500V8C0.500 4 3.500 2 7.500 2C9 0.700 11.500 0.500 13 1.800C14.300 2.900 14.600 4.500 14.300 5.600C15.800 5.600 16.800 4.600 16.800 3.200C16.800 2.200 16.200 1.600 15.500 1.600L15.500 0.300C17 0.300 18.100 1.500 18.100 3.200C18.100 5.600 16.300 7.100 14 7.100C13.500 8.500 12.800 9.500 12.800 10V13.500H9.800V11H8V13.500H5V11C4.500 11 4 11.200 3.700 11.500V13.500Z" fill="#a9b3be"/></svg><span class="t" id="t55" style="font-size:15px;line-height:20px;color:#1a1a1a;letter-spacing:0.203px;left:809.0px;top:79.8px;">build.gradle</span><svg class="a" style="left:896.5px;top:84px;" width="10" height="10" viewBox="0 0 10 10"><path d="M1 1l8 8M9 1l-8 8" stroke="#b4b4b4" stroke-width="1.3" fill="none"/></svg><svg class="a" style="left:926.5px;top:80px;overflow:visible;" width="20" height="19" viewBox="0 0 20 19"><circle cx="9" cy="9" r="8.900" fill="#8bd3ee"/><text x="8.7" y="13.300" font-size="16" font-family="Liberation Sans,sans-serif" text-anchor="middle" fill="#42525b">c</text><rect x="13.100" y="13" width="5.800" height="5.800" fill="#a3abc6"/><path d="M14.400 13v-1.300a1.600 1.600 0 0 1 3.200 0v1.300" fill="none" stroke="#a3abc6" stroke-width="1.100"/></svg><span class="t" id="t56" style="font-size:15px;line-height:20px;color:#1a1a1a;letter-spacing:-0.119px;left:949.0px;top:79.8px;">AutowiredAnnotationBeanPostProcessor.java</span><svg class="a" style="left:1253px;top:84px;" width="10" height="10" viewBox="0 0 10 10"><path d="M1 1l8 8M9 1l-8 8" stroke="#b4b4b4" stroke-width="1.3" fill="none"/></svg><svg class="a" style="left:1282px;top:80.2px;overflow:visible;" width="20" height="19" viewBox="0 0 20 19"><rect x="4" y="0.300" width="10" height="17.400" rx="1.600" fill="#86cfe8"/><path d="M2.900 2.800a9.500 9.500 0 0 0 0 12.400z" fill="#b4bcc6"/><path d="M15.100 2.800a9.500 9.500 0 0 1 0 12.400z" fill="#b4bcc6"/><text x="8.8" y="13.300" font-size="16" font-family="Liberation Sans,sans-serif" text-anchor="middle" fill="#42525b">c</text><rect x="13.100" y="13" width="5.800" height="5.800" fill="#a3abc6"/><path d="M14.400 13v-1.300a1.600 1.600 0 0 1 3.200 0v1.300" fill="none" stroke="#a3abc6" stroke-width="1.100"/></svg><span class="t" id="t57" style="font-size:15px;line-height:20px;color:#1a1a1a;letter-spacing:-0.010px;left:1305.0px;top:79.8px;">AbstractBeanDefinition.java</span><svg class="a" style="left:1496.5px;top:84px;" width="10" height="10" viewBox="0 0 10 10"><path d="M1 1l8 8M9 1l-8 8" stroke="#b4b4b4" stroke-width="1.3" fill="none"/></svg><svg class="a" style="left:1526px;top:80.2px;overflow:visible;" width="20" height="19" viewBox="0 0 20 19"><rect x="4" y="0.300" width="10" height="17.400" rx="1.600" fill="#86cfe8"/><path d="M2.900 2.800a9.500 9.500 0 0 0 0 12.400z" fill="#b4bcc6"/><path d="M15.100 2.800a9.500 9.500 0 0 1 0 12.400z" fill="#b4bcc6"/><text x="8.8" y="13.300" font-size="16" font-family="Liberation Sans,sans-serif" text-anchor="middle" fill="#42525b">c</text><rect x="13.100" y="13" width="5.800" height="5.800" fill="#a3abc6"/><path d="M14.400 13v-1.300a1.600 1.600 0 0 1 3.200 0v1.300" fill="none" stroke="#a3abc6" stroke-width="1.100"/></svg><div class="a" style="left:1549px;top:72px;width:278.5px;height:30px;overflow:hidden;"><span class="t" id="t58" style="font-size:15px;line-height:20px;color:#1a1a1a;letter-spacing:-0.010px;left:0.0px;top:7.8px;">AbstractAutowireCapableBeanFactory.java</span></div><svg class="a" style="left:1835px;top:84px;" width="10" height="10" viewBox="0 0 10 10"><path d="M1 1l8 8M9 1l-8 8" stroke="#b4b4b4" stroke-width="1.3" fill="none"/></svg><svg class="a" style="left:1861px;top:86px;" width="28" height="10" viewBox="0 0 28 10"><path d="M0 2.500h5.500l-2.750 3.500z" fill="#6e6e6e"/><path d="M8 1.500h10M8 4h10M8 6.500h10M8 9h10" stroke="#6e6e6e" stroke-width="1.100"/><text x="20.500" y="9.500" font-size="9.500" font-family="Liberation Sans,sans-serif" fill="#333">5</text></svg><div class="a" style="left:456px;top:106px;width:1438px;height:534px;overflow:hidden;background:#fff;"><div class="a" style="left:0px;top:0px;width:118.5px;height:534px;background:#f0f0f0;"></div><div class="a" style="left:0px;top:458px;width:1437px;height:25px;background:#fcf8e1;"></div><div class="a" style="left:1206px;top:0px;width:1px;height:534px;background:#e2e2e2;"></div><div class="a" style="left:118px;top:0px;width:1px;height:534px;background:#d4d4d4;"></div><div class="a" style="left:106.5px;top:108px;width:1.5px;height:375px;background:#7e98bd;"></div><div class="a" style="left:164.5px;top:108px;width:1px;height:350px;background:#e4e4e4;"></div><div class="a" style="left:200.5px;top:183px;width:1px;height:225px;background:#e4e4e4;"></div><div class="a" style="left:236.5px;top:208px;width:1px;height:175px;background:#e4e4e4;"></div><div class="a" style="left:272.5px;top:233px;width:1px;height:125px;background:#e4e4e4;"></div><div class="a" style="left:308.5px;top:308px;width:1px;height:25px;background:#e4e4e4;"></div><div class="a" style="left:432px;top:108.30000000000001px;width:9px;height:24.4px;background:#a8d1ff;"></div><div class="a" style="left:162px;top:458.29999999999995px;width:9px;height:24.4px;background:#a8d1ff;"></div><span class="t" id="t59" style="font-size:13.7px;line-height:18px;color:#9c9c9c;font-family:'DejaVu Sans Mono','Liberation Mono',monospace;left:6.8px;top:-14.3px;">1275</span><span class="t" id="t60" style="font-size:13.7px;line-height:18px;color:#9c9c9c;font-family:'DejaVu Sans Mono','Liberation Mono',monospace;left:6.8px;top:10.7px;">1276</span><span class="t" id="t61" style="font-size:13.7px;line-height:18px;color:#9c9c9c;font-family:'DejaVu Sans Mono','Liberation Mono',monospace;left:6.8px;top:35.7px;">1277</span><span class="t" id="t62" style="font-size:13.7px;line-height:18px;color:#9c9c9c;font-family:'DejaVu Sans Mono','Liberation Mono',monospace;left:6.8px;top:60.7px;">1278</span><span class="t" id="t63" style="font-size:13.7px;line-height:18px;color:#9c9c9c;font-family:'DejaVu Sans Mono','Liberation Mono',monospace;left:6.8px;top:85.7px;">1279</span><span class="t" id="t64" style="font-size:13.7px;line-height:18px;color:#9c9c9c;font-family:'DejaVu Sans Mono','Liberation Mono',monospace;left:6.8px;top:110.7px;">1280</span><span class="t" id="t65" style="font-size:13.7px;line-height:18px;color:#9c9c9c;font-family:'DejaVu Sans Mono','Liberation Mono',monospace;left:6.8px;top:135.7px;">1281</span><span class="t" id="t66" style="font-size:13.7px;line-height:18px;color:#9c9c9c;font-family:'DejaVu Sans Mono','Liberation Mono',monospace;left:6.8px;top:160.7px;">1282</span><span class="t" id="t67" style="font-size:13.7px;line-height:18px;color:#9c9c9c;font-family:'DejaVu Sans Mono','Liberation Mono',monospace;left:6.8px;top:185.7px;">1283</span><span class="t" id="t68" style="font-size:13.7px;line-height:18px;color:#9c9c9c;font-family:'DejaVu Sans Mono','Liberation Mono',monospace;left:6.8px;top:210.7px;">1284</span><span class="t" id="t69" style="font-size:13.7px;line-height:18px;color:#9c9c9c;font-family:'DejaVu Sans Mono','Liberation Mono',monospace;left:6.8px;top:235.7px;">1285</span><span class="t" id="t70" style="font-size:13.7px;line-height:18px;color:#9c9c9c;font-family:'DejaVu Sans Mono','Liberation Mono',monospace;left:6.8px;top:260.7px;">1286</span><span class="t" id="t71" style="font-size:13.7px;line-height:18px;color:#9c9c9c;font-family:'DejaVu Sans Mono','Liberation Mono',monospace;left:6.8px;top:285.7px;">1287</span><span class="t" id="t72" style="font-size:13.7px;line-height:18px;color:#9c9c9c;font-family:'DejaVu Sans Mono','Liberation Mono',monospace;left:6.8px;top:310.7px;">1288</span><span class="t" id="t73" style="font-size:13.7px;line-height:18px;color:#9c9c9c;font-family:'DejaVu Sans Mono','Liberation Mono',monospace;left:6.8px;top:335.7px;">1289</span><span class="t" id="t74" style="font-size:13.7px;line-height:18px;color:#9c9c9c;font-family:'DejaVu Sans Mono','Liberation Mono',monospace;left:6.8px;top:360.7px;">1290</span><span class="t" id="t75" style="font-size:13.7px;line-height:18px;color:#9c9c9c;font-family:'DejaVu Sans Mono','Liberation Mono',monospace;left:6.8px;top:385.7px;">1291</span><span class="t" id="t76" style="font-size:13.7px;line-height:18px;color:#9c9c9c;font-family:'DejaVu Sans Mono','Liberation Mono',monospace;left:6.8px;top:410.7px;">1292</span><span class="t" id="t77" style="font-size:13.7px;line-height:18px;color:#9c9c9c;font-family:'DejaVu Sans Mono','Liberation Mono',monospace;left:6.8px;top:435.7px;">1293</span><span class="t" id="t78" style="font-size:13.7px;line-height:18px;color:#9c9c9c;font-family:'DejaVu Sans Mono','Liberation Mono',monospace;left:6.8px;top:460.7px;">1294</span><span class="t" id="t79" style="font-size:13.7px;line-height:18px;color:#9c9c9c;font-family:'DejaVu Sans Mono','Liberation Mono',monospace;left:6.8px;top:485.7px;">1295</span><span class="t" id="t80" style="font-size:13.7px;line-height:18px;color:#9c9c9c;font-family:'DejaVu Sans Mono','Liberation Mono',monospace;left:6.8px;top:510.7px;">1296</span><span class="t" id="t81" style="font-size:15px;line-height:20px;color:#5a5a5a;letter-spacing:-0.550px;left:85.3px;top:85.1px;">@</span><svg class="a" style="left:113px;top:115px;" width="11" height="12" viewBox="0 0 11 12"><path d="M0.500 0.500h10v6.500l-5 4.500-5-4.500z" fill="#fff" stroke="#c9c9c9"/><path d="M3 5.500h5" stroke="#b0b0b0" stroke-width="1"/></svg><svg class="a" style="left:113px;top:165px;" width="11" height="12" viewBox="0 0 11 12"><path d="M0.500 0.500h10v6.500l-5 4.500-5-4.500z" fill="#fff" stroke="#c9c9c9"/><path d="M3 5.500h5" stroke="#b0b0b0" stroke-width="1"/></svg><svg class="a" style="left:113px;top:190px;" width="11" height="12" viewBox="0 0 11 12"><path d="M0.500 0.500h10v6.500l-5 4.500-5-4.500z" fill="#fff" stroke="#c9c9c9"/><path d="M3 5.500h5" stroke="#b0b0b0" stroke-width="1"/></svg><svg class="a" style="left:113px;top:215px;" width="11" height="12" viewBox="0 0 11 12"><path d="M0.500 0.500h10v6.500l-5 4.500-5-4.500z" fill="#fff" stroke="#c9c9c9"/><path d="M3 5.500h5" stroke="#b0b0b0" stroke-width="1"/></svg><svg class="a" style="left:113px;top:290px;" width="11" height="12" viewBox="0 0 11 12"><path d="M0.500 0.500h10v6.500l-5 4.500-5-4.500z" fill="#fff" stroke="#c9c9c9"/><path d="M3 5.500h5" stroke="#b0b0b0" stroke-width="1"/></svg><svg class="a" style="left:113px;top:515px;" width="11" height="12" viewBox="0 0 11 12"><path d="M0.500 0.500h10v6.500l-5 4.500-5-4.500z" fill="#fff" stroke="#c9c9c9"/><path d="M3 5.500h5" stroke="#b0b0b0" stroke-width="1"/></svg><svg class="a" style="left:113px;top:37px;" width="11" height="13" viewBox="0 0 11 13"><path d="M0.500 12.500h10v-6.500l-5-5-5 5z" fill="#fff" stroke="#c9c9c9"/><path d="M3 7.500h5" stroke="#b0b0b0" stroke-width="1"/></svg><svg class="a" style="left:113px;top:337px;" width="11" height="13" viewBox="0 0 11 13"><path d="M0.500 12.500h10v-6.500l-5-5-5 5z" fill="#fff" stroke="#c9c9c9"/><path d="M3 7.500h5" stroke="#b0b0b0" stroke-width="1"/></svg><svg class="a" style="left:113px;top:362px;" width="11" height="13" viewBox="0 0 11 13"><path d="M0.500 12.500h10v-6.500l-5-5-5 5z" fill="#fff" stroke="#c9c9c9"/><path d="M3 7.500h5" stroke="#b0b0b0" stroke-width="1"/></svg><svg class="a" style="left:113px;top:387px;" width="11" height="13" viewBox="0 0 11 13"><path d="M0.500 12.500h10v-6.500l-5-5-5 5z" fill="#fff" stroke="#c9c9c9"/><path d="M3 7.500h5" stroke="#b0b0b0" stroke-width="1"/></svg><svg class="a" style="left:113px;top:412px;" width="11" height="13" viewBox="0 0 11 13"><path d="M0.500 12.500h10v-6.500l-5-5-5 5z" fill="#fff" stroke="#c9c9c9"/><path d="M3 7.500h5" stroke="#b0b0b0" stroke-width="1"/></svg><svg class="a" style="left:113px;top:462px;" width="11" height="13" viewBox="0 0 11 13"><path d="M0.500 12.500h10v-6.500l-5-5-5 5z" fill="#fff" stroke="#c9c9c9"/><path d="M3 7.500h5" stroke="#b0b0b0" stroke-width="1"/></svg><span class="t" id="t82" style="font-size:14.95px;line-height:20px;color:#808080;font-family:'DejaVu Sans Mono','Liberation Mono',monospace;font-style:italic;left:171.0px;top:-14.6px;">* </span><span class="t" id="t83" style="font-size:14.95px;line-height:20px;color:#808080;font-family:'DejaVu Sans Mono','Liberation Mono',monospace;font-weight:700;font-style:italic;left:189.0px;top:-14.6px;text-decoration:underline;text-decoration-skip-ink:none;">@throws</span><span class="t" id="t84" style="font-size:14.95px;line-height:20px;color:#3a3a3a;font-family:'DejaVu Sans Mono','Liberation Mono',monospace;font-style:italic;left:252.0px;top:-14.6px;"> org.springframework.beans.BeansException</span><span class="t" id="t85" style="font-size:14.95px;line-height:20px;color:#808080;font-family:'DejaVu Sans Mono','Liberation Mono',monospace;font-style:italic;left:621.0px;top:-14.6px;"> in case of errors</span><span class="t" id="t86" style="font-size:14.95px;line-height:20px;color:#808080;font-family:'DejaVu Sans Mono','Liberation Mono',monospace;font-style:italic;left:171.0px;top:10.4px;">* </span><span class="t" id="t87" style="font-size:14.95px;line-height:20px;color:#808080;font-family:'DejaVu Sans Mono','Liberation Mono',monospace;font-weight:700;font-style:italic;left:189.0px;top:10.4px;text-decoration:underline;text-decoration-skip-ink:none;">@see</span><span class="t" id="t88" style="font-size:14.95px;line-height:20px;color:#3a3a3a;font-family:'DejaVu Sans Mono','Liberation Mono',monospace;font-style:italic;left:225.0px;top:10.4px;"> org.springframework.beans.factory.config.SmartInstantiationAwareBeanPostProcessor</span><span class="t" id="t89" style="font-size:14.95px;line-height:20px;color:#808080;font-family:'DejaVu Sans Mono','Liberation Mono',monospace;font-style:italic;left:963.0px;top:10.4px;">#</span><span class="t" id="t90" style="font-size:14.95px;line-height:20px;color:#3a3a3a;font-family:'DejaVu Sans Mono','Liberation Mono',monospace;font-style:italic;left:972.0px;top:10.4px;">determineCandidateConstructors</span><span class="t" id="t91" style="font-size:14.95px;line-height:20px;color:#808080;font-family:'DejaVu Sans Mono','Liberation Mono',monospace;font-style:italic;left:171.0px;top:35.4px;">*/</span><span class="t" id="t92" style="font-size:14.95px;line-height:20px;color:#808000;font-family:'DejaVu Sans Mono','Liberation Mono',monospace;left:162.0px;top:60.4px;">@Nullable</span><span class="t" id="t93" style="font-size:14.95px;line-height:20px;color:#000080;font-family:'DejaVu Sans Mono','Liberation Mono',monospace;font-weight:700;left:162.0px;top:85.4px;">protected</span><span class="t" id="t94" style="font-size:14.95px;line-height:20px;color:#000;font-family:'DejaVu Sans Mono','Liberation Mono',monospace;left:243.0px;top:85.4px;"> Constructor&lt;?&gt;[] determineConstructorsFromBeanPostProcessors(</span><span class="t" id="t95" style="font-size:14.95px;line-height:20px;color:#808000;font-family:'DejaVu Sans Mono','Liberation Mono',monospace;left:801.0px;top:85.4px;">@Nullable</span><span class="t" id="t96" style="font-size:14.95px;line-height:20px;color:#000;font-family:'DejaVu Sans Mono','Liberation Mono',monospace;left:882.0px;top:85.4px;"> Class&lt;?&gt; beanClass, String beanName)</span><span class="t" id="t97" style="font-size:14.95px;line-height:20px;color:#000080;font-family:'DejaVu Sans Mono','Liberation Mono',monospace;font-weight:700;left:234.0px;top:110.4px;">throws</span><span class="t" id="t98" style="font-size:14.95px;line-height:20px;color:#000;font-family:'DejaVu Sans Mono','Liberation Mono',monospace;left:288.0px;top:110.4px;"> BeansException {</span><span class="t" id="t99" style="font-size:14.95px;line-height:20px;color:#000080;font-family:'DejaVu Sans Mono','Liberation Mono',monospace;font-weight:700;left:198.0px;top:160.4px;">if</span><span class="t" id="t100" style="font-size:14.95px;line-height:20px;color:#000;font-family:'DejaVu Sans Mono','Liberation Mono',monospace;left:216.0px;top:160.4px;"> (beanClass != </span><span class="t" id="t101" style="font-size:14.95px;line-height:20px;color:#000080;font-family:'DejaVu Sans Mono','Liberation Mono',monospace;font-weight:700;left:351.0px;top:160.4px;">null</span><span class="t" id="t102" style="font-size:14.95px;line-height:20px;color:#000;font-family:'DejaVu Sans Mono','Liberation Mono',monospace;left:387.0px;top:160.4px;"> &amp;&amp; hasInstantiationAwareBeanPostProcessors()) {</span><span class="t" id="t103" style="font-size:14.95px;line-height:20px;color:#000080;font-family:'DejaVu Sans Mono','Liberation Mono',monospace;font-weight:700;left:234.0px;top:185.4px;">for</span><span class="t" id="t104" style="font-size:14.95px;line-height:20px;color:#000;font-family:'DejaVu Sans Mono','Liberation Mono',monospace;left:261.0px;top:185.4px;"> (BeanPostProcessor bp : getBeanPostProcessors()) {</span><span class="t" id="t105" style="font-size:14.95px;line-height:20px;color:#000080;font-family:'DejaVu Sans Mono','Liberation Mono',monospace;font-weight:700;left:270.0px;top:210.4px;">if</span><span class="t" id="t106" style="font-size:14.95px;line-height:20px;color:#000;font-family:'DejaVu Sans Mono','Liberation Mono',monospace;left:288.0px;top:210.4px;"> (bp </span><span class="t" id="t107" style="font-size:14.95px;line-height:20px;color:#000080;font-family:'DejaVu Sans Mono','Liberation Mono',monospace;font-weight:700;left:333.0px;top:210.4px;">instanceof</span><span class="t" id="t108" style="font-size:14.95px;line-height:20px;color:#000;font-family:'DejaVu Sans Mono','Liberation Mono',monospace;left:423.0px;top:210.4px;"> SmartInstantiationAwareBeanPostProcessor) {</span><span class="t" id="t109" style="font-size:14.95px;line-height:20px;color:#000;font-family:'DejaVu Sans Mono','Liberation Mono',monospace;left:306.0px;top:235.4px;">SmartInstantiationAwareBeanPostProcessor ibp = (SmartInstantiationAwareBeanPostProcessor) bp;</span><span class="t" id="t110" style="font-size:14.95px;line-height:20px;color:#000;font-family:'DejaVu Sans Mono','Liberation Mono',monospace;left:306.0px;top:260.4px;">Constructor&lt;?&gt;[] ctors = ibp.determineCandidateConstructors(beanClass, beanName);</span><span class="t" id="t111" style="font-size:14.95px;line-height:20px;color:#000080;font-family:'DejaVu Sans Mono','Liberation Mono',monospace;font-weight:700;left:306.0px;top:285.4px;">if</span><span class="t" id="t112" style="font-size:14.95px;line-height:20px;color:#000;font-family:'DejaVu Sans Mono','Liberation Mono',monospace;left:324.0px;top:285.4px;"> (ctors != </span><span class="t" id="t113" style="font-size:14.95px;line-height:20px;color:#000080;font-family:'DejaVu Sans Mono','Liberation Mono',monospace;font-weight:700;left:423.0px;top:285.4px;">null</span><span class="t" id="t114" style="font-size:14.95px;line-height:20px;color:#000;font-family:'DejaVu Sans Mono','Liberation Mono',monospace;left:459.0px;top:285.4px;">) {</span><span class="t" id="t115" style="font-size:14.95px;line-height:20px;color:#000080;font-family:'DejaVu Sans Mono','Liberation Mono',monospace;font-weight:700;left:342.0px;top:310.4px;">return</span><span class="t" id="t116" style="font-size:14.95px;line-height:20px;color:#000;font-family:'DejaVu Sans Mono','Liberation Mono',monospace;left:396.0px;top:310.4px;"> ctors;</span><span class="t" id="t117" style="font-size:14.95px;line-height:20px;color:#000;font-family:'DejaVu Sans Mono','Liberation Mono',monospace;left:306.0px;top:335.4px;">}</span><span class="t" id="t118" style="font-size:14.95px;line-height:20px;color:#000;font-family:'DejaVu Sans Mono','Liberation Mono',monospace;left:270.0px;top:360.4px;">}</span><span class="t" id="t119" style="font-size:14.95px;line-height:20px;color:#000;font-family:'DejaVu Sans Mono','Liberation Mono',monospace;left:234.0px;top:385.4px;">}</span><span class="t" id="t120" style="font-size:14.95px;line-height:20px;color:#000;font-family:'DejaVu Sans Mono','Liberation Mono',monospace;left:198.0px;top:410.4px;">}</span><span class="t" id="t121" style="font-size:14.95px;line-height:20px;color:#000080;font-family:'DejaVu Sans Mono','Liberation Mono',monospace;font-weight:700;left:198.0px;top:435.4px;">return</span><span class="t" id="t122" style="font-size:14.95px;line-height:20px;color:#000;font-family:'DejaVu Sans Mono','Liberation Mono',monospace;left:252.0px;top:435.4px;"> </span><span class="t" id="t123" style="font-size:14.95px;line-height:20px;color:#000080;font-family:'DejaVu Sans Mono','Liberation Mono',monospace;font-weight:700;left:261.0px;top:435.4px;">null</span><span class="t" id="t124" style="font-size:14.95px;line-height:20px;color:#000;font-family:'DejaVu Sans Mono','Liberation Mono',monospace;left:297.0px;top:435.4px;">;</span><span class="t" id="t125" style="font-size:14.95px;line-height:20px;color:#000;font-family:'DejaVu Sans Mono','Liberation Mono',monospace;left:162.0px;top:460.4px;">}</span><span class="t" id="t126" style="font-size:14.95px;line-height:20px;color:#808080;font-family:'DejaVu Sans Mono','Liberation Mono',monospace;font-style:italic;left:162.0px;top:510.4px;">/**</span><div class="a" style="left:170px;top:459.5px;width:2px;height:20px;background:#000;"></div><div class="a" style="left:126px;top:520px;width:341.5px;height:11px;background:rgba(200,200,200,0.55);"></div><div class="a" style="left:1425px;top:309px;width:11px;height:44px;background:#e1e1e1;"></div><div class="a" style="left:1436px;top:349px;width:2px;height:25px;background:#b5cfee;"></div><div class="a" style="left:1436px;top:96px;width:1.5px;height:28px;background:#faf7d4;"></div><svg class="a" style="left:1421px;top:3px;" width="15" height="11" viewBox="0 0 15 11"><path d="M1.500 6l4 3.500 8-8.500" stroke="#59a869" stroke-width="2.600" fill="none"/></svg></div><div class="a" style="left:456px;top:640px;width:1438px;height:28px;background:#f2f2f2;"></div><div class="a" style="left:456px;top:639px;width:1438px;height:1px;background:#d9d9d9;"></div><div class="a" style="left:456px;top:668px;width:1438px;height:1px;background:#d1d1d1;"></div><span class="t" id="t127" style="font-size:15px;line-height:20px;color:#707070;letter-spacing:-0.068px;left:585.5px;top:645.1px;">AbstractAutowireCapableBeanFactory</span><svg class="a" style="left:851px;top:649.5px;" width="6" height="9" viewBox="0 0 6 9"><path d="M1 0.500l3.800 4-3.800 4" stroke="#9a9a9a" stroke-width="1.300" fill="none"/></svg><span class="t" id="t128" style="font-size:15px;line-height:20px;color:#707070;letter-spacing:-0.269px;left:867.8px;top:645.1px;">determineConstructorsFromBeanPostProcessors()</span><div class="a" style="left:27px;top:669px;width:1867px;height:356px;background:#f2f2f2;"></div><div class="a dots" style="left:30px;top:672px;width:1860px;height:28px"></div><span class="t" id="t129" style="font-size:15px;line-height:20px;color:#1a1a1a;letter-spacing:-0.062px;left:35.5px;top:675.6px;">Debug:</span><svg class="a" style="left:106.5px;top:679px;" width="19" height="14" viewBox="0 0 19 14"><path d="M0.500 13.500V8C0.500 4 3.500 2 7.500 2C9 0.700 11.500 0.500 13 1.800C14.300 2.900 14.600 4.500 14.300 5.600C15.800 5.600 16.800 4.600 16.800 3.200C16.800 2.200 16.200 1.600 15.500 1.600L15.500 0.300C17 0.300 18.100 1.500 18.100 3.200C18.100 5.600 16.300 7.100 14 7.100C13.500 8.500 12.800 9.500 12.800 10V13.500H9.800V11H8V13.500H5V11C4.500 11 4 11.200 3.700 11.500V13.500Z" fill="#c3c9ce"/></svg><svg class="a" style="left:120.5px;top:689.5px;" width="7" height="7" viewBox="0 0 7 7"><circle cx="3.500" cy="3.500" r="3.100" fill="#7bd06a"/></svg><span class="t" id="t130" style="font-size:15px;line-height:20px;color:#1a1a1a;letter-spacing:0.195px;left:131.2px;top:675.6px;">autowiring-magic-spring-boot [AutowireMagicA...</span><svg class="a" style="left:473px;top:682px;" width="10" height="10" viewBox="0 0 10 10"><path d="M1 1l8 8M9 1l-8 8" stroke="#b4b4b4" stroke-width="1.3" fill="none"/></svg><svg class="a" style="left:512px;top:676.5px;" width="19" height="17" viewBox="0 0 19 17"><rect x="4.500" y="0.500" width="13" height="10" fill="none" stroke="#aab4bd"/><rect x="0.500" y="3.500" width="14" height="11" fill="#f2f2f2" stroke="#aab4bd"/><rect x="0.500" y="3.500" width="14" height="2.500" fill="#aab4bd"/><rect x="2.500" y="9.500" width="10" height="3.500" fill="#8ed1e9"/><path d="M3 7.500h7M8 5.500l2.500 2-2.500 2" stroke="#555" stroke-width="1.100" fill="none"/><circle cx="16" cy="14" r="3" fill="#22c322"/></svg><span class="t" id="t131" style="font-size:15px;line-height:20px;color:#1a1a1a;letter-spacing:0.144px;left:535.8px;top:675.6px;">:AutowireMagicApplication.main()</span><svg class="a" style="left:773px;top:682px;" width="10" height="10" viewBox="0 0 10 10"><path d="M1 1l8 8M9 1l-8 8" stroke="#b4b4b4" stroke-width="1.3" fill="none"/></svg><div class="a" style="left:496.5px;top:698.5px;width:300px;height:3.5px;background:#9aa7bf;"></div><svg class="a" style="left:1837px;top:677.5px;" width="16.5" height="16.5" viewBox="0 0 16 16"><path fill-rule="evenodd" d="M5.87,0.29 L10.13,0.29 L10.38,2.38 L11.68,3.13 L13.61,2.30 L15.74,5.99 L14.05,7.25 L14.05,8.75 L15.74,10.01 L13.61,13.70 L11.68,12.87 L10.38,13.62 L10.13,15.71 L5.87,15.71 L5.62,13.62 L4.32,12.87 L2.39,13.70 L0.26,10.01 L1.95,8.75 L1.95,7.25 L0.26,5.99 L2.39,2.30 L4.32,3.13 L5.62,2.38z M8 5.100a2.900 2.900 0 1 0 0.001 0z" fill="#6e6e6e" stroke="#6e6e6e" stroke-width="0.600" stroke-linejoin="round"/></svg><div class="a" style="left:1870.5px;top:684px;width:15px;height:2px;background:#6e6e6e;"></div><div class="a" style="left:62px;top:702px;width:1px;height:323px;background:#d1d1d1;"></div><svg class="a" style="left:36px;top:710px;" width="19" height="20" viewBox="0 0 19 20"><path d="M12 6.200H8.700A5.900 5.900 0 0 0 8.700 18H9.300" fill="none" stroke="#59a869" stroke-width="2.600"/><path d="M11.100 0.900V11L18.200 6.400Z" fill="#59a869"/><rect x="10.100" y="12.200" width="6.700" height="6.700" fill="#6e6e6e"/></svg><div class="a" style="left:33px;top:740px;width:24px;height:1px;background:#cfcfcf;"></div><svg class="a" style="left:38.5px;top:753px;" width="16" height="15" viewBox="0 0 16 15"><rect x="0" y="0.500" width="3.500" height="14" fill="#59a869"/><path d="M6 0.500v14l9.500-7z" fill="#59a869"/></svg><svg class="a" style="left:40px;top:786px;" width="10" height="14" viewBox="0 0 10 14"><rect x="0" y="0" width="3.500" height="14" fill="#c0c0c0"/><rect x="6.500" y="0" width="3.500" height="14" fill="#c0c0c0"/></svg><div class="a" style="left:39px;top:820px;width:12.5px;height:12.5px;background:#db5860;"></div><div class="a" style="left:33px;top:846px;width:24px;height:1px;background:#cfcfcf;"></div><svg class="a" style="left:37px;top:859px;" width="18" height="17" viewBox="0 0 18 17"><circle cx="11.500" cy="5.500" r="5.300" fill="#db5860" stroke="#f2f2f2" stroke-width="1"/><circle cx="6.500" cy="10.500" r="5.800" fill="#db5860" stroke="#f2f2f2" stroke-width="1.200"/></svg><svg class="a" style="left:37px;top:891px;" width="18" height="18" viewBox="0 0 18 18"><circle cx="9" cy="9" r="6.500" fill="#db5860"/><path d="M1 15.500l15-14" stroke="#f2f2f2" stroke-width="4.500"/><path d="M1 16l15.500-14.500" stroke="#555" stroke-width="1.600"/></svg><div class="a" style="left:33px;top:920px;width:24px;height:1px;background:#cfcfcf;"></div><svg class="a" style="left:36px;top:933px;" width="19" height="16" viewBox="0 0 19 16"><path d="M0 3h4.500l1.500-3h7l1.500 3h4.500v13h-19z" fill="#5a5a5a"/><circle cx="9.500" cy="9" r="4.200" fill="#f2f2f2"/><circle cx="9.500" cy="9" r="2.300" fill="#5a5a5a"/></svg><div class="a" style="left:33px;top:961px;width:24px;height:1px;background:#cfcfcf;"></div><svg class="a" style="left:37px;top:975px;" width="15.5" height="15.5" viewBox="0 0 16 16"><path fill-rule="evenodd" d="M5.87,0.29 L10.13,0.29 L10.38,2.38 L11.68,3.13 L13.61,2.30 L15.74,5.99 L14.05,7.25 L14.05,8.75 L15.74,10.01 L13.61,13.70 L11.68,12.87 L10.38,13.62 L10.13,15.71 L5.87,15.71 L5.62,13.62 L4.32,12.87 L2.39,13.70 L0.26,10.01 L1.95,8.75 L1.95,7.25 L0.26,5.99 L2.39,2.30 L4.32,3.13 L5.62,2.38z M8 5.100a2.900 2.900 0 1 0 0.001 0z" fill="#5a5a5a" stroke="#5a5a5a" stroke-width="0.600" stroke-linejoin="round"/></svg><svg class="a" style="left:50px;top:990.5px;" width="6" height="4" viewBox="0 0 6 4"><path d="M0 0h6l-3 3.500z" fill="#333"/></svg><svg class="a" style="left:42px;top:1009.5px;" width="9" height="7" viewBox="0 0 9 7"><path d="M0.500 0.500l3 3-3 3M5 0.500l3 3-3 3" stroke="#5a5a5a" stroke-width="1" fill="none"/></svg><span class="t" id="t132" style="font-size:13px;line-height:18px;color:#1a1a1a;letter-spacing:0.236px;left:78.5px;top:711.5px;">Debugger</span><div class="a" style="left:64px;top:735px;width:88px;height:2px;background:#8aa2c6;"></div><svg class="a" style="left:168px;top:714px;" width="15.5" height="12.5" viewBox="0 0 15.5 12.5"><rect width="15.500" height="12.500" fill="#5a5a5a"/><path d="M4.500 3l3.700 3.200-3.700 3.200" stroke="#fff" stroke-width="1.600" fill="none"/></svg><span class="t" id="t133" style="font-size:13px;line-height:18px;color:#1a1a1a;letter-spacing:-0.100px;left:189.8px;top:711.5px;">Console</span><svg class="a" style="left:253px;top:713px;" width="16" height="14" viewBox="0 0 16 14"><rect x="0" y="0" width="16" height="2.300" fill="#6e6e6e"/><rect x="0" y="5.300" width="16" height="3.200" fill="#3a94dc"/><rect x="0" y="11.500" width="16" height="2.300" fill="#6e6e6e"/></svg><div class="a" style="left:281px;top:707px;width:1px;height:24px;background:#cfcfcf;"></div><svg class="a" style="left:295px;top:712px;" width="16" height="15" viewBox="0 0 16 15"><path d="M1 8l4.500-5.500 7 6.500" fill="none" stroke="#3a94dc" stroke-width="1.900"/><path d="M15.500 3.500v7.500h-7.500z" fill="#3a94dc"/><rect x="0.500" y="12.800" width="15" height="1.900" fill="#6e6e6e"/></svg><svg class="a" style="left:327px;top:712px;" width="16" height="15" viewBox="0 0 16 15"><path d="M8 0v8" stroke="#3a94dc" stroke-width="2"/><path d="M2.500 5.200h11l-5.500 5.800z" fill="#3a94dc"/><rect x="0.500" y="12.800" width="15" height="1.900" fill="#6e6e6e"/></svg><svg class="a" style="left:360px;top:712px;" width="16" height="15" viewBox="0 0 16 15"><path d="M8 0v8" stroke="#db5860" stroke-width="2"/><path d="M2.500 5.200h11l-5.500 5.800z" fill="#db5860"/><rect x="0.500" y="12.800" width="15" height="1.900" fill="#6e6e6e"/></svg><svg class="a" style="left:392px;top:712px;" width="16" height="15" viewBox="0 0 16 15"><path d="M8 3v8" stroke="#3a94dc" stroke-width="2"/><path d="M2.500 6.300h11l-5.500-5.800z" fill="#3a94dc"/><rect x="0.500" y="12.800" width="15" height="1.900" fill="#6e6e6e"/></svg><svg class="a" style="left:424.5px;top:710.5px;" width="17" height="17" viewBox="0 0 17 17"><path d="M1 1l7 7M8 1l-7 7" stroke="#db5860" stroke-width="2.500"/><path d="M8.500 5.600h6.300v9.200h-9.100v-5" fill="none" stroke="#6e6e6e" stroke-width="2.200"/></svg><svg class="a" style="left:456.5px;top:710.5px;" width="19" height="18" viewBox="0 0 19 18"><path d="M1.300 1.300l7 7" stroke="#3a94dc" stroke-width="2.400"/><path d="M10.200 1.800v7.800h-8.300z" fill="#3a94dc"/><path d="M10.800 7.900h6.800M10.800 16.800h6.800M14.200 7.900v8.900" stroke="#5a5a5a" stroke-width="1.100"/></svg><div class="a" style="left:485px;top:707px;width:1px;height:24px;background:#cfcfcf;"></div><svg class="a" style="left:498.5px;top:711.2px;" width="15" height="15" viewBox="0 0 15 15"><rect width="15" height="15" fill="#6e6e6e"/><rect x="2.600" y="2.700" width="9.800" height="2" fill="#f2f2f2"/><rect x="2.7" y="7" width="2.200" height="2.100" fill="#f2f2f2"/><rect x="6.4" y="7" width="2.200" height="2.100" fill="#f2f2f2"/><rect x="10.1" y="7" width="2.200" height="2.100" fill="#f2f2f2"/><rect x="2.7" y="10.7" width="2.200" height="2.100" fill="#f2f2f2"/><rect x="6.4" y="10.7" width="2.200" height="2.100" fill="#f2f2f2"/><rect x="10.1" y="10.7" width="2.200" height="2.100" fill="#f2f2f2"/></svg><svg class="a" style="left:531px;top:713px;" width="16" height="13" viewBox="0 0 16 13"><path d="M0 1.500h6M0 6.500h4.500M0 11.500h6M9.500 1.500h6.500M9.500 6.500h6.500M9.500 11.500h6.500M4.500 6.500l4-5M4.500 6.500l4 5" stroke="#c4c4c4" stroke-width="1.700" fill="none"/></svg><svg class="a" style="left:1868px;top:713px;" width="20" height="18" viewBox="0 0 20 18"><rect x="0" y="0" width="16" height="6" fill="#5a5a5a"/><rect x="0" y="7.500" width="7.500" height="6" fill="#5a5a5a"/><rect x="8.500" y="7.500" width="7.500" height="6" fill="#5a5a5a"/><path d="M14 14.500h6l-3 3.500z" fill="#333"/></svg><div class="a" style="left:63px;top:736px;width:1831px;height:1px;background:#d6d6d6;"></div><span class="t" id="t134" style="font-size:13px;line-height:18px;color:#1a1a1a;letter-spacing:-0.294px;left:78.5px;top:745.8px;">Frames</span><span class="t" id="t135" style="font-size:13px;line-height:18px;color:#1a1a1a;letter-spacing:0.085px;left:407.8px;top:745.8px;">Variables</span><div class="a" style="left:63px;top:770px;width:1831px;height:1px;background:#d1d1d1;"></div><div class="a" style="left:391px;top:737px;width:1px;height:288px;background:#d1d1d1;"></div><div class="a" style="left:65px;top:773px;width:222px;height:31.5px;background:#e6e6e6;border:1px solid #b9b9b9;box-sizing:border-box;"></div><svg class="a" style="left:75.5px;top:781.5px;" width="18" height="14" viewBox="0 0 18 14"><path d="M1.500 7.500l4.800 4.500 10-10.500" stroke="#f2873d" stroke-width="2.600" fill="none"/></svg><span class="t" id="t136" style="font-size:15px;line-height:20px;color:#1a1a1a;letter-spacing:0.103px;left:98.2px;top:779.8px;">"main"@1 in group "mai.</span><svg class="a" style="left:269.5px;top:785.5px;" width="11" height="7" viewBox="0 0 12 8"><path d="M1.200 1.300l4.800 4.600 4.800-4.600" fill="none" stroke="#6e6e6e" stroke-width="1.6"/></svg><svg class="a" style="left:302px;top:781.5px;" width="12" height="15" viewBox="0 0 12 15"><path d="M6 1.500v13.500M0.800 7l5.200-5.500 5.200 5.500" stroke="#5a5a5a" stroke-width="1.700" fill="none"/></svg><svg class="a" style="left:333.5px;top:781.5px;" width="12" height="15" viewBox="0 0 12 15"><path d="M6 0v13.500M0.800 8l5.200 5.500 5.200-5.500" stroke="#5a5a5a" stroke-width="1.700" fill="none"/></svg><svg class="a" style="left:365px;top:781.5px;" width="16" height="15" viewBox="0 0 16 15"><path d="M0 0h16l-6 7v8h-4v-8z" fill="#5a5a5a"/></svg><div class="a" style="left:64px;top:808px;width:327.5px;height:216.5px;overflow:hidden;background:#fffee6;"><div class="a" style="left:0px;top:76.5px;width:327.5px;height:24.5px;background:#1a7dc4;"></div><span class="t" id="t137" style="font-size:15px;line-height:20px;color:#999999;letter-spacing:-0.226px;left:10.0px;top:4.7px;">createArgumentArray:806,</span><span class="t" id="t138" style="font-size:15px;line-height:20px;color:#999999;letter-spacing:-0.259px;left:186.1px;top:4.7px;">ConstructorResolver</span><span class="t" id="t139" style="font-size:15px;line-height:20px;color:#8c8c8c;font-style:italic;left:321.3px;top:4.7px;letter-spacing:-0.4px;">(org.springframework</span><span class="t" id="t140" style="font-size:15px;line-height:20px;color:#999999;letter-spacing:-0.171px;left:10.0px;top:29.7px;">autowireConstructor:228,</span><span class="t" id="t141" style="font-size:15px;line-height:20px;color:#999999;letter-spacing:-0.233px;left:178.0px;top:29.7px;">ConstructorResolver</span><span class="t" id="t142" style="font-size:15px;line-height:20px;color:#8c8c8c;font-style:italic;left:314.3px;top:29.7px;letter-spacing:-0.4px;">(org.springframework</span><span class="t" id="t143" style="font-size:15px;line-height:20px;color:#999999;letter-spacing:-0.234px;left:10.0px;top:54.7px;">autowireConstructor:1358,</span><span class="t" id="t144" style="font-size:15px;line-height:20px;color:#999999;left:186.1px;top:54.7px;letter-spacing:0.08px;">AbstractAutowireCapableBeanFactory</span><span class="t" id="t145" style="font-size:15px;line-height:20px;color:#fff;letter-spacing:-0.348px;left:10.0px;top:79.7px;">createBeanInstance:1204,</span><span class="t" id="t146" style="font-size:15px;line-height:20px;color:#fff;left:180.2px;top:79.7px;letter-spacing:-0.08px;">AbstractAutowireCapableBeanFactory</span><span class="t" id="t147" style="font-size:15px;line-height:20px;color:#999999;letter-spacing:-0.377px;left:10.0px;top:104.7px;">doCreateBean:557,</span><span class="t" id="t148" style="font-size:15px;line-height:20px;color:#999999;left:138.5px;top:104.7px;letter-spacing:-0.13px;">AbstractAutowireCapableBeanFactory</span><span class="t" id="t149" style="font-size:15px;line-height:20px;color:#999999;letter-spacing:-0.406px;left:10.0px;top:129.7px;">createBean:517,</span><span class="t" id="t150" style="font-size:15px;line-height:20px;color:#999999;left:118.3px;top:129.7px;letter-spacing:-0.1px;">AbstractAutowireCapableBeanFactory</span><span class="t" id="t151" style="font-size:15px;line-height:20px;color:#999999;letter-spacing:-0.278px;left:10.0px;top:154.7px;">lambda$doGetBean$0:323,</span><span class="t" id="t152" style="font-size:15px;line-height:20px;color:#999999;left:193.3px;top:154.7px;letter-spacing:-0.36px;">AbstractBeanFactory</span><span class="t" id="t153" style="font-size:15px;line-height:20px;color:#999999;letter-spacing:-0.084px;left:10.0px;top:179.7px;">getObject:-1,</span><span class="t" id="t154" style="font-size:15px;line-height:20px;color:#999999;letter-spacing:-0.364px;left:100.3px;top:179.7px;">2052435819</span><span class="t" id="t155" style="font-size:15px;line-height:20px;color:#8c8c8c;font-style:italic;left:184.5px;top:179.7px;letter-spacing:-0.45px;">(org.springframework.beans.factory</span><span class="t" id="t156" style="font-size:15px;line-height:20px;color:#999999;letter-spacing:-0.274px;left:10.0px;top:204.7px;">getSingleton:222,</span><span class="t" id="t157" style="font-size:15px;line-height:20px;color:#999999;left:129.9px;top:204.7px;letter-spacing:-0.1px;">DefaultSingletonBeanRegistry</span><div class="a" style="left:315px;top:0px;width:11px;height:51px;background:rgba(180,180,160,0.35);"></div><div class="a" style="left:0px;top:204px;width:122px;height:12px;background:rgba(180,180,160,0.35);"></div></div><svg class="a" style="left:402px;top:782px;" width="12" height="12" viewBox="0 0 12 12"><path d="M6 0v12M0 6h12" stroke="#5a5a5a" stroke-width="1.700"/></svg><div class="a" style="left:402px;top:819.5px;width:12px;height:1.7px;background:#c4c4c4;"></div><svg class="a" style="left:401.5px;top:850px;" width="14" height="7" viewBox="0 0 14 7"><path d="M0 7h14l-7-7z" fill="#c8c8c8"/></svg><svg class="a" style="left:401.5px;top:881px;" width="14" height="7" viewBox="0 0 14 7"><path d="M0 0h14l-7 7z" fill="#c8c8c8"/></svg><svg class="a" style="left:400px;top:909px;" width="16" height="16" viewBox="0 0 16 16"><path d="M0.800 11.500v-10.700h10.200" fill="none" stroke="#c4c4c4" stroke-width="1.600"/><rect x="4" y="4" width="11.500" height="11.500" fill="#c4c4c4"/><path d="M6.500 7.500h6.500M6.500 10h6.500M6.500 12.500h6.500" stroke="#f2f2f2" stroke-width="1"/></svg><div class="a" style="left:394px;top:936px;width:27px;height:27.5px;background:#c6c6c6;"></div><svg class="a" style="left:399px;top:945px;" width="19" height="11" viewBox="0 0 19 11"><circle cx="4.700" cy="6" r="3.700" fill="none" stroke="#5a5a5a" stroke-width="1.700"/><circle cx="14.300" cy="6" r="3.700" fill="none" stroke="#5a5a5a" stroke-width="1.700"/><path d="M1 4.500v-3.500M18 4.500v-3.500M8.400 5.500h2.200" stroke="#5a5a5a" stroke-width="1.500" fill="none"/><path d="M0.500 1h18" stroke="#5a5a5a" stroke-width="1.700"/></svg><div class="a" style="left:423px;top:771px;width:1px;height:254px;background:#c4c4c4;"></div><div class="a" style="left:424px;top:771px;width:1469.5px;height:253.5px;overflow:hidden;background:#fff;"><svg class="a" style="left:5px;top:-7.5px;" width="7.5" height="12" viewBox="0 0 8 12"><path d="M1.300 1.200l4.600 4.800-4.600 4.800" fill="none" stroke="#9a9a9a" stroke-width="2.500"/></svg><svg class="a" style="left:30.5px;top:-8.0px;" width="13" height="14" viewBox="0 0 13 14"><rect y="0.200" width="12.700" height="3.300" fill="#f7d08f"/><rect y="5.200" width="12.700" height="3.300" fill="#f7d08f"/><rect y="10.200" width="12.700" height="3.300" fill="#f7d08f"/></svg><span class="t" id="t158" style="font-size:15px;line-height:20px;color:#840c0c;letter-spacing:0.550px;left:50.0px;top:-10.0px;">this</span><span class="t" id="t159" style="font-size:15px;line-height:20px;color:#000;letter-spacing:0.550px;left:79.8px;top:-10.0px;">=</span><span class="t" id="t160" style="font-size:15px;line-height:20px;color:#999999;letter-spacing:-0.269px;left:93.0px;top:-10.0px;">{DefaultListableBeanFactory@4486}</span><span class="t" id="t161" style="font-size:15px;line-height:20px;color:#000;letter-spacing:-0.064px;left:337.0px;top:-10.0px;">"org.springframework.beans.factory.support.DefaultListableBeanFactory@3cdf2c61: defining beans [org.springframework.context.annotation.internalConfigurationAn</span><span class="t" id="t162" style="font-size:15px;line-height:20px;color:#7b9bc8;letter-spacing:-0.240px;left:1420.5px;top:-10.0px;">... View</span><svg class="a" style="left:5px;top:17.5px;" width="7.5" height="12" viewBox="0 0 8 12"><path d="M1.300 1.200l4.600 4.800-4.600 4.800" fill="none" stroke="#9a9a9a" stroke-width="2.500"/></svg><svg class="a" style="left:28px;top:14.200000000000045px;" width="18" height="18" viewBox="0 0 18 18"><circle cx="9" cy="9" r="8.900" fill="#f6d088"/><text x="9.300" y="12.300" font-size="13.500" font-family="Liberation Sans,sans-serif" text-anchor="middle" fill="#4a4a55">p</text></svg><span class="t" id="t163" style="font-size:15px;line-height:20px;color:#840c0c;letter-spacing:0.014px;left:49.5px;top:15.0px;">beanName</span><span class="t" id="t164" style="font-size:15px;line-height:20px;color:#000;letter-spacing:0.550px;left:127.6px;top:15.0px;">=</span><span class="t" id="t165" style="font-size:15px;line-height:20px;color:#067d17;font-weight:700;letter-spacing:-0.214px;left:141.8px;top:15.0px;">"autowire.AlbumService"</span><svg class="a" style="left:5px;top:42.5px;" width="7.5" height="12" viewBox="0 0 8 12"><path d="M1.300 1.200l4.600 4.800-4.600 4.800" fill="none" stroke="#9a9a9a" stroke-width="2.500"/></svg><svg class="a" style="left:28px;top:39.200000000000045px;" width="18" height="18" viewBox="0 0 18 18"><circle cx="9" cy="9" r="8.900" fill="#f6d088"/><text x="9.300" y="12.300" font-size="13.500" font-family="Liberation Sans,sans-serif" text-anchor="middle" fill="#4a4a55">p</text></svg><span class="t" id="t166" style="font-size:15px;line-height:20px;color:#840c0c;letter-spacing:0.550px;left:50.6px;top:40.0px;">mbd</span><span class="t" id="t167" style="font-size:15px;line-height:20px;color:#000;letter-spacing:0.550px;left:87.1px;top:40.0px;">=</span><span class="t" id="t168" style="font-size:15px;line-height:20px;color:#999999;letter-spacing:-0.051px;left:99.5px;top:40.0px;">{RootBeanDefinition@5421}</span><span class="t" id="t169" style="font-size:15px;line-height:20px;color:#000;letter-spacing:-0.054px;left:290.2px;top:40.0px;">"Root bean: class [com.github.pagram1975.autowiremagic.AlbumService]; scope=singleton; abstract=false; lazyInit=false; autowireMode=0; dependencyCheck=0; autowire</span><span class="t" id="t170" style="font-size:15px;line-height:20px;color:#7b9bc8;letter-spacing:-0.240px;left:1420.5px;top:40.0px;">... View</span><svg class="a" style="left:28px;top:64.20000000000005px;" width="18" height="18" viewBox="0 0 18 18"><circle cx="9" cy="9" r="8.900" fill="#f6d088"/><text x="9.300" y="12.300" font-size="13.500" font-family="Liberation Sans,sans-serif" text-anchor="middle" fill="#4a4a55">p</text></svg><span class="t" id="t171" style="font-size:15px;line-height:20px;color:#840c0c;letter-spacing:-0.122px;left:49.5px;top:65.0px;">args</span><span class="t" id="t172" style="font-size:15px;line-height:20px;color:#000;letter-spacing:0.550px;left:82.6px;top:65.0px;">=</span><span class="t" id="t173" style="font-size:15px;line-height:20px;color:#000;letter-spacing:0.235px;left:95.5px;top:65.0px;">null</span><svg class="a" style="left:5px;top:92.5px;" width="7.5" height="12" viewBox="0 0 8 12"><path d="M1.300 1.200l4.600 4.800-4.600 4.800" fill="none" stroke="#9a9a9a" stroke-width="2.500"/></svg><svg class="a" style="left:30.5px;top:92.0px;" width="13" height="14" viewBox="0 0 13 14"><rect y="0.200" width="12.700" height="3.300" fill="#f7d08f"/><rect y="5.200" width="12.700" height="3.300" fill="#f7d08f"/><rect y="10.200" width="12.700" height="3.300" fill="#f7d08f"/></svg><span class="t" id="t174" style="font-size:15px;line-height:20px;color:#840c0c;letter-spacing:-0.466px;left:49.5px;top:90.0px;">beanClass</span><span class="t" id="t175" style="font-size:15px;line-height:20px;color:#000;letter-spacing:0.550px;left:120.6px;top:90.0px;">=</span><span class="t" id="t176" style="font-size:15px;line-height:20px;color:#999999;letter-spacing:-0.550px;left:133.5px;top:90.0px;">{Class@4286}</span><span class="t" id="t177" style="font-size:15px;line-height:20px;color:#000;letter-spacing:-0.074px;left:227.3px;top:90.0px;">"class com.github.pagram1975.autowiremagic.AlbumService"</span><span class="t" id="t178" style="font-size:15px;line-height:20px;color:#7b9bc8;letter-spacing:-0.065px;left:631.0px;top:90.0px;">... Navigate</span><svg class="a" style="left:30.5px;top:117.0px;" width="13" height="14" viewBox="0 0 13 14"><rect y="0.200" width="12.700" height="3.300" fill="#f7d08f"/><rect y="5.200" width="12.700" height="3.300" fill="#f7d08f"/><rect y="10.200" width="12.700" height="3.300" fill="#f7d08f"/></svg><span class="t" id="t179" style="font-size:15px;line-height:20px;color:#840c0c;letter-spacing:-0.057px;left:49.5px;top:115.0px;">instanceSupplier</span><span class="t" id="t180" style="font-size:15px;line-height:20px;color:#000;letter-spacing:0.550px;left:164.1px;top:115.0px;">=</span><span class="t" id="t181" style="font-size:15px;line-height:20px;color:#000;letter-spacing:0.160px;left:177.0px;top:115.0px;">null</span><svg class="a" style="left:29px;top:141.0px;" width="16" height="15" viewBox="0 0 16 15"><rect width="16" height="15" fill="#8ed1e9"/><text x="7.900" y="10.800" font-size="8.800" font-weight="700" font-family="Liberation Sans,sans-serif" text-anchor="middle" fill="#46555e" textLength="10.500" lengthAdjust="spacingAndGlyphs">01</text></svg><span class="t" id="t182" style="font-size:15px;line-height:20px;color:#840c0c;letter-spacing:-0.025px;left:49.5px;top:140.0px;">resolved</span><span class="t" id="t183" style="font-size:15px;line-height:20px;color:#000;letter-spacing:0.550px;left:110.6px;top:140.0px;">=</span><span class="t" id="t184" style="font-size:15px;line-height:20px;color:#000;letter-spacing:0.062px;left:123.5px;top:140.0px;">false</span><svg class="a" style="left:29px;top:166.0px;" width="16" height="15" viewBox="0 0 16 15"><rect width="16" height="15" fill="#8ed1e9"/><text x="7.900" y="10.800" font-size="8.800" font-weight="700" font-family="Liberation Sans,sans-serif" text-anchor="middle" fill="#46555e" textLength="10.500" lengthAdjust="spacingAndGlyphs">01</text></svg><span class="t" id="t185" style="font-size:15px;line-height:20px;color:#840c0c;letter-spacing:-0.180px;left:49.5px;top:165.0px;">autowireNecessary</span><span class="t" id="t186" style="font-size:15px;line-height:20px;color:#000;letter-spacing:0.550px;left:178.6px;top:165.0px;">=</span><span class="t" id="t187" style="font-size:15px;line-height:20px;color:#000;letter-spacing:-0.017px;left:191.5px;top:165.0px;">false</span><svg class="a" style="left:3.5px;top:195.0px;" width="12" height="7.5" viewBox="0 0 12 8"><path d="M1.200 1.300l4.800 4.600 4.800-4.600" fill="none" stroke="#9a9a9a" stroke-width="2.5"/></svg><svg class="a" style="left:28px;top:190.5px;" width="17" height="17" viewBox="0 0 17 17"><text x="0.300" y="4.700" font-size="5.500" font-family="Liberation Sans,sans-serif" fill="#444">1</text><text x="0.300" y="10.700" font-size="5.500" font-family="Liberation Sans,sans-serif" fill="#444">2</text><text x="0.300" y="16.600" font-size="5.500" font-family="Liberation Sans,sans-serif" fill="#444">3</text><rect x="6.700" y="1.500" width="9.700" height="2.900" fill="#6cc4e6"/><rect x="6.700" y="7.400" width="9.700" height="2.900" fill="#6cc4e6"/><rect x="6.700" y="13.400" width="9.700" height="2.900" fill="#6cc4e6"/></svg><span class="t" id="t188" style="font-size:15px;line-height:20px;color:#840c0c;letter-spacing:0.037px;left:49.5px;top:190.0px;">ctors</span><span class="t" id="t189" style="font-size:15px;line-height:20px;color:#000;letter-spacing:0.550px;left:86.6px;top:190.0px;">=</span><span class="t" id="t190" style="font-size:15px;line-height:20px;color:#999999;letter-spacing:-0.135px;left:99.5px;top:190.0px;">{Constructor[1]@5422}</span><svg class="a" style="left:30px;top:217.5px;" width="7.5" height="12" viewBox="0 0 8 12"><path d="M1.300 1.200l4.600 4.800-4.600 4.800" fill="none" stroke="#9a9a9a" stroke-width="2.500"/></svg><svg class="a" style="left:55.5px;top:217.0px;" width="13" height="14" viewBox="0 0 13 14"><rect y="0.200" width="12.700" height="3.300" fill="#f7d08f"/><rect y="5.200" width="12.700" height="3.300" fill="#f7d08f"/><rect y="10.200" width="12.700" height="3.300" fill="#f7d08f"/></svg><span class="t" id="t191" style="font-size:15px;line-height:20px;color:#840c0c;letter-spacing:0.550px;left:74.5px;top:215.0px;">0</span><span class="t" id="t192" style="font-size:15px;line-height:20px;color:#000;letter-spacing:0.550px;left:87.6px;top:215.0px;">=</span><span class="t" id="t193" style="font-size:15px;line-height:20px;color:#999999;letter-spacing:-0.203px;left:100.5px;top:215.0px;">{Constructor@5430}</span><span class="t" id="t194" style="font-size:15px;line-height:20px;color:#000;letter-spacing:-0.063px;left:237.5px;top:215.0px;">"public com.github.pagram1975.autowiremagic.AlbumService(com.github.pagram1975.autowiremagic.ArtistService,org.springframework.core.convert.ConversionService)"</span><div class="a" style="left:0px;top:241.5px;width:293px;height:12px;background:rgba(0,0,0,0.110);"></div><div class="a" style="left:1457.5px;top:15px;width:11px;height:236px;background:rgba(0,0,0,0.110);"></div></div><div class="a" style="left:0px;top:1025px;width:1920px;height:1px;background:#cdcdcd;"></div><div class="a" style="left:0px;top:1026px;width:1920px;height:26px;background:#f2f2f2;"></div><div class="a" style="left:108px;top:1026px;width:98px;height:26px;background:#bdbdbd;"></div><svg class="a" style="left:41px;top:1035px;" width="10" height="12" viewBox="0 0 10 12"><path d="M0 0v12l10-6z" fill="#6e6e6e"/></svg><span class="t" id="t195" style="font-size:13px;line-height:18px;color:#1a1a1a;letter-spacing:-0.335px;left:60.0px;top:1033.0px;"><u>4</u>: Run</span><svg class="a" style="left:122.5px;top:1032px;" width="16" height="17" viewBox="0 0 16 17"><ellipse cx="6.800" cy="9.500" rx="4.700" ry="6" fill="#6e6e6e"/><path d="M0.300 6h13M0.300 9.600h13M0.300 13.200h13" stroke="#6e6e6e" stroke-width="1.700"/><path d="M3.400 0.600l2.600 3.400M10.200 0.600l-2.600 3.400" stroke="#6e6e6e" stroke-width="1.800" fill="none"/><circle cx="12.400" cy="14" r="3" fill="#1ee61e"/></svg><span class="t" id="t196" style="font-size:13px;line-height:18px;color:#1a1a1a;letter-spacing:0.027px;left:142.8px;top:1033.0px;"><u>5</u>: Debug</span><svg class="a" style="left:222.5px;top:1035px;" width="13" height="11" viewBox="0 0 13 11"><path d="M0 1h2.200M0 5.500h2.200M0 10h2.200M3.800 1h9.200M3.800 5.500h9.200M3.800 10h9.200" stroke="#6e6e6e" stroke-width="2.100"/></svg><span class="t" id="t197" style="font-size:13px;line-height:18px;color:#1a1a1a;letter-spacing:-0.221px;left:240.8px;top:1033.0px;"><u>6</u>: TODO</span><svg class="a" style="left:320.5px;top:1034px;" width="13" height="13" viewBox="0 0 13 13"><path d="M1.500 0v13" stroke="#6e6e6e" stroke-width="2"/><path d="M1.500 8.800h4.500c2 0 3.200-1 3.200-3v-2" fill="none" stroke="#6e6e6e" stroke-width="2"/><path d="M5.500 4.600h7.400l-3.700-4.600z" fill="#6e6e6e"/></svg><span class="t" id="t198" style="font-size:13px;line-height:18px;color:#1a1a1a;letter-spacing:0.148px;left:339.5px;top:1033.0px;"><u>9</u>: Version Control</span><svg class="a" style="left:475px;top:1034px;" width="14.5" height="12.5" viewBox="0 0 14.5 12.5"><rect width="14.500" height="12.500" fill="#6e6e6e"/><path d="M3 3l3 2.700-3 2.700M7.500 9.500h4" stroke="#f2f2f2" stroke-width="1.400" fill="none"/></svg><span class="t" id="t199" style="font-size:13px;line-height:18px;color:#1a1a1a;letter-spacing:0.234px;left:494.5px;top:1033.0px;">Terminal</span><svg class="a" style="left:1802px;top:1032px;" width="18" height="17" viewBox="0 0 18 17"><path d="M8.500 1a7.500 7.500 0 1 0 0 15h8v-7.500a7.500 7.500 0 0 0-8-7.500z" fill="none" stroke="#6e6e6e" stroke-width="1.700"/></svg><span class="t" id="t200" style="font-size:13px;line-height:18px;color:#1a1a1a;letter-spacing:-0.116px;left:1823.8px;top:1033.0px;">Event Log</span><div class="a" style="left:0px;top:1052px;width:1920px;height:2px;background:#8e8e8e;"></div><div class="a" style="left:0px;top:1054px;width:1920px;height:24px;background:#f2f2f2;"></div><svg class="a" style="left:7.5px;top:1058.5px;" width="16" height="16" viewBox="0 0 16 16"><rect x="3.500" y="0.700" width="11.500" height="11.500" fill="#f2f2f2" stroke="#6e6e6e" stroke-width="1.300"/><path d="M0.700 3.500v11.500h11.500" fill="none" stroke="#6e6e6e" stroke-width="1.300"/></svg><span class="t" id="t201" style="font-size:15px;line-height:20px;color:#1a1a1a;letter-spacing:-0.550px;left:1456.5px;top:1055.6px;">1294:6</span><span class="t" id="t202" style="font-size:15px;line-height:20px;color:#9a9a9a;letter-spacing:-0.550px;left:1512.9px;top:1055.6px;">LF</span><span class="t" id="t203" style="font-size:15px;line-height:20px;color:#9a9a9a;letter-spacing:-0.550px;left:1542.5px;top:1055.6px;">UTF-8</span><span class="t" id="t204" style="font-size:15px;line-height:20px;color:#1a1a1a;letter-spacing:-0.178px;left:1595.8px;top:1055.6px;">Git: master</span><span class="t" id="t205" style="font-size:15px;line-height:20px;color:#1a1a1a;letter-spacing:-0.135px;left:1682.9px;top:1055.6px;">AWS: No credentials selected</span><svg class="a" style="left:1891px;top:1057px;" width="16" height="17" viewBox="0 0 16 17"><path d="M4 5.500c0-3.500 1-5 4-5s4 1.500 4 5z" fill="#6e6e6e"/><rect x="0" y="5" width="16" height="1.600" fill="#6e6e6e"/><path d="M4.500 7h7v4.500c0 1.500-1.500 2.500-3.500 2.500s-3.500-1-3.500-2.500z" fill="#6e6e6e"/><path d="M7 7.500h4.500v4.500h-3z" fill="#f2f2f2"/><path d="M2 17c0-2 2-3 6-3s6 1 6 3z" fill="#6e6e6e"/></svg><div class="a" style="left:0px;top:1078px;width:1920px;height:2px;background:#2b2b2b;"></div></body></html>
